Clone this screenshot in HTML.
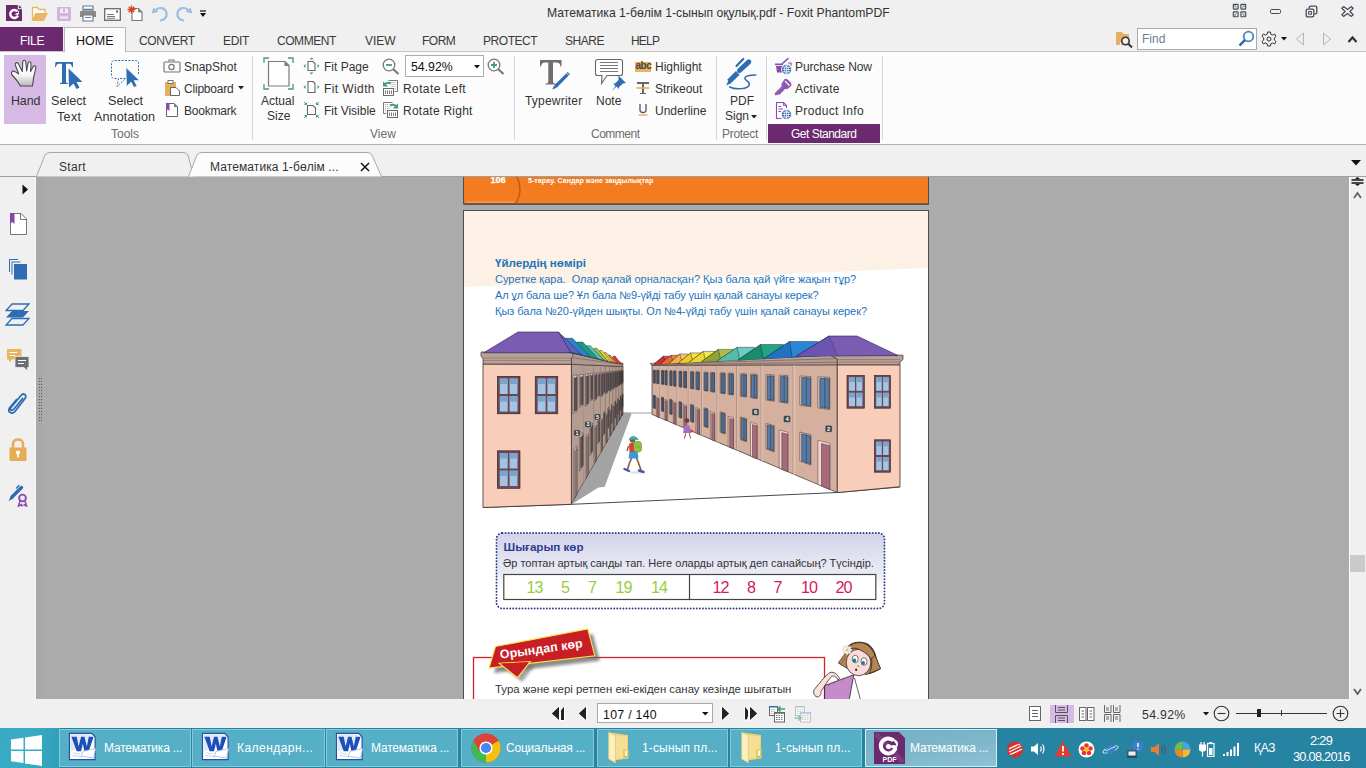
<!DOCTYPE html>
<html><head><meta charset="utf-8">
<style>
*{margin:0;padding:0;box-sizing:border-box}
html,body{width:1366px;height:768px;overflow:hidden;background:#f0f0f0;font-family:"Liberation Sans",sans-serif;font-size:12px;color:#222}
.a{position:absolute}
.t{position:absolute;white-space:nowrap;line-height:1}
#title{left:0;top:0;width:1366px;height:27px;background:#f0f0f0}
#menu{left:0;top:27px;width:1366px;height:25px;background:#f0f0f0}
#ribbon{left:0;top:52px;width:1366px;height:93px;background:#fcfcfc;border-bottom:1px solid #b3b3b3}
#doctabs{left:0;top:145px;width:1366px;height:32px;background:#f0f0f0;border-bottom:1px solid #a0a0a0}
#side{left:0;top:177px;width:36px;height:522px;background:#f0f0f0;border-right:1px solid #f8f8f8}
#view{left:36px;top:177px;width:1313px;height:522px;background:#ababab;overflow:hidden}
#vscroll{left:1349px;top:177px;width:17px;height:522px;background:#f0f0f0;border-left:1px solid #fff}
#status{left:0;top:699px;width:1366px;height:29px;background:#f0f0f0}
#taskbar{left:0;top:728px;width:1366px;height:40px;background:#2683a2}
.sep{position:absolute;top:56px;width:1px;height:84px;background:#d6d6d6}
.glab{position:absolute;top:128px;color:#6d6d6d;font-size:12px;white-space:nowrap;line-height:1}
.mt{position:absolute;top:35px;font-size:12px;color:#3a3a3a;white-space:nowrap;line-height:1}
.tb{position:absolute;top:731px;height:35px;background:rgba(120,200,220,0.45);border:1px solid rgba(180,230,240,0.6)}
.tbt{position:absolute;top:742px;color:#fff;font-size:12px;white-space:nowrap;line-height:1}
</style></head><body>

<!-- title bar -->
<div id="title" class="a"></div>
<div id="menu" class="a"></div>
<div class="t" style="left:547px;top:7px;font-size:12.2px;color:#333">Математика 1-бөлім 1-сынып оқулық.pdf - Foxit PhantomPDF</div>

<!-- quick access -->
<svg class="a" style="left:5px;top:4px" width="19" height="18" viewBox="0 0 19 18">
 <path d="M1 1 H12.8 V5.2 H17 V17 H1 Z" fill="#6b2a6f"/>
 <path d="M13.8 1 L17 4.2 H13.8 Z" fill="#6b2a6f"/>
 <path d="M12.2 7.2 A4 4 0 1 0 13 11.5" fill="none" stroke="#fff" stroke-width="2.4"/>
 <path d="M9.5 10.5 Q11 8.5 13.5 9 Q12.5 6.5 10.5 6 Q13 5.5 14 7.5 Q14.5 9.5 13 11 Z" fill="#fff"/>
</svg>
<svg class="a" style="left:31px;top:6px" width="18" height="16" viewBox="0 0 18 16">
 <path d="M1.5 14.5 V1.5 H6.5 L8 3.5 H14 V7" fill="#fff" stroke="#ebb660" stroke-width="1.3"/>
 <path d="M4.3 7 H17 L12.8 15 H1 Z" fill="#ebb660"/>
</svg>
<svg class="a" style="left:57px;top:7px" width="14" height="14" viewBox="0 0 14 14">
 <rect x="0" y="0" width="14" height="14" fill="#cdb6d9"/>
 <rect x="3" y="1.5" width="8" height="4.5" fill="#f3ecf6"/>
 <rect x="6" y="2" width="2" height="3" fill="#cdb6d9"/>
 <rect x="3" y="9.5" width="8" height="2" fill="#f3ecf6"/>
</svg>
<svg class="a" style="left:79px;top:5px" width="18" height="17" viewBox="0 0 18 17">
 <path d="M4 1 H14 V6 H4 Z" fill="#fff" stroke="#777" stroke-width="1.2"/>
 <path d="M4.5 4.5 H13.5" stroke="#4a84c4" stroke-width="1.5"/>
 <path d="M1 7 Q1 6 2 6 H16 Q17 6 17 7 V12 H1 Z" fill="#888"/>
 <path d="M4 10 H14 V16 H4 Z" fill="#fff" stroke="#777" stroke-width="1.2"/>
 <path d="M6 12.5 H12" stroke="#4a84c4" stroke-width="1"/>
</svg>
<svg class="a" style="left:104px;top:8px" width="17" height="13" viewBox="0 0 17 13">
 <rect x="0.7" y="0.7" width="15.6" height="11.6" fill="#fff" stroke="#6a6a6a" stroke-width="1.3"/>
 <rect x="12" y="2.5" width="2" height="2" fill="#2e6db4"/>
 <path d="M3 6.5 H10 M3 8.5 H11 M3 10.3 H11" stroke="#6a6a6a" stroke-width="0.9"/>
</svg>
<svg class="a" style="left:127px;top:5px" width="17" height="17" viewBox="0 0 17 17">
 <path d="M5 3.5 H11.5 L15 7 V15.5 H5 Z" fill="#fff" stroke="#777" stroke-width="1.1"/>
 <path d="M11 3 L15.5 7.5 H11 Z" fill="#888"/>
 <path d="M4.5 0.5 V8.5 M0.5 4.5 H8.5 M1.7 1.7 L7.3 7.3 M7.3 1.7 L1.7 7.3" stroke="#d9402a" stroke-width="1.3"/>
</svg>
<svg class="a" style="left:151px;top:6px" width="18" height="16" viewBox="0 0 18 16">
 <path d="M4.5 4.5 C7.5 0.5 14 1.5 15.5 6.5 C16.5 10.5 13.5 14.5 9 14.5" fill="none" stroke="#9ebfe0" stroke-width="2.2"/>
 <path d="M0.5 7.5 L2.5 1.5 L7.5 6 Z" fill="#9ebfe0"/>
</svg>
<svg class="a" style="left:175px;top:6px" width="18" height="16" viewBox="0 0 18 16">
 <path d="M13.5 4.5 C10.5 0.5 4 1.5 2.5 6.5 C1.5 10.5 4.5 14.5 9 14.5" fill="none" stroke="#9ebfe0" stroke-width="2.2"/>
 <path d="M17.5 7.5 L15.5 1.5 L10.5 6 Z" fill="#9ebfe0"/>
</svg>
<svg class="a" style="left:200px;top:10px" width="6" height="8" viewBox="0 0 6 8">
 <path d="M0 1 H6" stroke="#111" stroke-width="1.2"/>
 <path d="M0 3 H6 L3 7 Z" fill="#111"/>
</svg>

<!-- window controls -->
<svg class="a" style="left:1232px;top:3px" width="16" height="15" viewBox="0 0 16 15">
 <g fill="none" stroke="#454b58" stroke-width="1.15">
  <rect x="1.3" y="1.3" width="4.8" height="4.8" rx="0.5"/><rect x="8.9" y="1.3" width="4.8" height="4.8" rx="0.5"/>
  <rect x="1.3" y="8.9" width="4.8" height="4.8" rx="0.5"/><rect x="8.9" y="8.9" width="4.8" height="4.8" rx="0.5"/>
 </g>
 <g fill="none" stroke="#6a707c" stroke-width="0.7">
  <path d="M2.8 2.8 L4.8 4.8 M2.8 4.3 V2.8 H4.3"/><path d="M12.2 2.8 L10.2 4.8 M10.7 2.8 H12.2 V4.3"/>
  <path d="M2.8 12.2 L4.8 10.2 M2.8 10.7 V12.2 H4.3"/><path d="M12.2 12.2 L10.2 10.2 M12.2 10.7 V12.2 H10.7"/>
 </g>
</svg>
<div class="a" style="left:1270px;top:9px;width:11px;height:5px;border:1.4px solid #454b58;border-radius:1.6px"></div>
<svg class="a" style="left:1305px;top:5px" width="13" height="13" viewBox="0 0 13 13">
 <path d="M4.2 3.5 V2.5 Q4.2 1.2 5.5 1.2 H10.5 Q11.8 1.2 11.8 2.5 V7.5 Q11.8 8.8 10.5 8.8 H9.5" fill="none" stroke="#454b58" stroke-width="1.3"/>
 <rect x="1.2" y="4.2" width="7.6" height="7.6" rx="1.3" fill="#f0f0f0" stroke="#454b58" stroke-width="1.3"/>
 <rect x="3.6" y="6.6" width="2.8" height="2.6" fill="none" stroke="#454b58" stroke-width="1"/>
</svg>
<svg class="a" style="left:1341px;top:6px" width="13" height="11" viewBox="0 0 13 11">
 <path d="M0.8 2.2 L2.6 0.6 L6.5 3.6 L10.4 0.6 L12.2 2.2 L8.8 5.5 L12.2 8.8 L10.4 10.4 L6.5 7.4 L2.6 10.4 L0.8 8.8 L4.2 5.5 Z" fill="#f4f4f4" stroke="#454b58" stroke-width="1.2" stroke-linejoin="round"/>
</svg>

<!-- find area -->
<svg class="a" style="left:1115px;top:31px" width="19" height="17" viewBox="0 0 19 17">
 <path d="M1 1 H7 L8.5 3 H14 V7 H1 Z" fill="#e6b060"/>
 <path d="M1 4 H14 V14 H1 Z" fill="#e6b060"/>
 <path d="M5 14 L8.5 7" stroke="#fff" stroke-width="1.2"/>
 <circle cx="10.5" cy="10" r="3.7" fill="#f0f0f0" stroke="#333" stroke-width="1.6"/>
 <path d="M13 12.5 L17 16.5" stroke="#333" stroke-width="2"/>
</svg>
<div class="a" style="left:1137px;top:28px;width:120px;height:22px;background:#fff;border:1px solid #a9a9a9"></div>
<div class="t" style="left:1142px;top:33px;color:#6d7d8d;font-size:12px">Find</div>
<svg class="a" style="left:1238px;top:30px" width="17" height="17" viewBox="0 0 17 17">
 <circle cx="10.5" cy="6.5" r="4.8" fill="none" stroke="#3c8ac6" stroke-width="1.8"/>
 <path d="M7 10 L1.5 15.5" stroke="#2c5f9c" stroke-width="2.4"/>
</svg>
<svg class="a" style="left:1261px;top:31px" width="16" height="16" viewBox="0 0 16 16">
 <path d="M6.6 1 H9.4 L9.9 3.2 L11.6 4.1 L13.6 3 L15 5.4 L13.3 6.9 V9.1 L15 10.6 L13.6 13 L11.6 11.9 L9.9 12.8 L9.4 15 H6.6 L6.1 12.8 L4.4 11.9 L2.4 13 L1 10.6 L2.7 9.1 V6.9 L1 5.4 L2.4 3 L4.4 4.1 L6.1 3.2 Z" fill="none" stroke="#333" stroke-width="1"/>
 <circle cx="8" cy="8" r="2" fill="none" stroke="#333" stroke-width="1"/>
</svg>
<svg class="a" style="left:1281px;top:37px" width="6" height="4"><path d="M0 0 H6 L3 3.5 Z" fill="#111"/></svg>
<svg class="a" style="left:1295px;top:32px" width="10" height="14" viewBox="0 0 10 14"><path d="M8.5 1 L1.5 7 L8.5 13 Z" fill="none" stroke="#b5b5b5" stroke-width="1"/></svg>
<svg class="a" style="left:1322px;top:32px" width="10" height="14" viewBox="0 0 10 14"><path d="M1.5 1 L8.5 7 L1.5 13 Z" fill="none" stroke="#b5b5b5" stroke-width="1"/></svg>
<svg class="a" style="left:1347px;top:35px" width="11" height="9" viewBox="0 0 11 9"><path d="M1.5 7 L5.5 2.5 L9.5 7" fill="none" stroke="#333" stroke-width="2.2"/></svg>

<!-- menu tabs -->
<div class="a" style="left:0;top:51px;width:1366px;height:1px;background:#c6c6c6"></div>
<div class="a" style="left:0;top:27px;width:63px;height:24px;background:#6b2a6f"></div>
<div class="t" style="left:20px;top:35px;color:#fff;font-size:12px;letter-spacing:-0.3px">FILE</div>
<div class="a" style="left:64px;top:27px;width:62px;height:26px;background:#fcfcfc;border:1px solid #b9b9b9;border-bottom:none"></div>
<div class="t" style="left:76px;top:35px;color:#111;font-size:12.5px">HOME</div>
<div class="mt" style="left:139px;letter-spacing:-0.4px">CONVERT</div>
<div class="mt" style="left:223px;letter-spacing:-0.3px">EDIT</div>
<div class="mt" style="left:277px;letter-spacing:-0.45px">COMMENT</div>
<div class="mt" style="left:365px">VIEW</div>
<div class="mt" style="left:422px;letter-spacing:-0.5px">FORM</div>
<div class="mt" style="left:483px;letter-spacing:-0.45px">PROTECT</div>
<div class="mt" style="left:565px;letter-spacing:-0.45px">SHARE</div>
<div class="mt" style="left:631px;letter-spacing:-0.8px">HELP</div>

<!-- ribbon -->
<div id="ribbon" class="a"></div>
<!-- Tools group -->
<div class="a" style="left:4px;top:55px;width:42px;height:69px;background:#d6b9e4"></div>
<svg class="a" style="left:8px;top:56px" width="34" height="34" viewBox="0 0 34 34">
 <defs><linearGradient id="hg" x1="0" y1="0" x2="0" y2="1"><stop offset="0" stop-color="#fff"/><stop offset="0.55" stop-color="#fafafa"/><stop offset="1" stop-color="#b8b8b8"/></linearGradient></defs>
 <path d="M12.4 30 C10.5 26 8 23 4.5 19.5 C2.5 17.5 3.5 14.5 6 15.2 C8 15.8 9.5 17 10.8 18 L7.4 9.2 C6.6 6.8 9.4 5.6 10.4 7.8 L14.3 15.4 L14.8 6 C14.9 3.6 17.6 3.6 17.8 6 L18.6 15 L20 7.4 C20.5 5 23.2 5.3 23 7.8 L22.6 15.6 L25 11 C26 9 28.6 9.8 27.8 12.2 C26.4 17 25.2 22 24.5 30 Z" fill="url(#hg)" stroke="#4a4a4a" stroke-width="1.1" stroke-linejoin="round"/>
</svg>
<div class="t" style="left:11px;top:95px;font-size:12.4px;letter-spacing:-0.1px;color:#333">Hand</div>
<svg class="a" style="left:54px;top:61px" width="30" height="29" viewBox="0 0 30 29">
 <path d="M1.5 1 H19 V6 H18 C17.5 3.5 17 2.8 15 2.8 H12 V20.5 C12 21.5 12.5 22 14 22 V23 H6 V22 C7.5 22 8 21.5 8 20.5 V2.8 H5 C3 2.8 2.5 3.5 2 6 H1 Z" fill="#2e6db4"/>
 <path d="M14.5 7.5 L28.5 21 H22.5 L25.5 26.5 L22.5 28 L19.5 22.5 L15 26.5 Z" fill="#2e6db4"/>
</svg>
<div class="t" style="left:51px;top:95px;font-size:12.6px;color:#333">Select</div>
<div class="t" style="left:57px;top:111px;font-size:12.6px;letter-spacing:0.3px;color:#333">Text</div>
<svg class="a" style="left:110px;top:59px" width="32" height="30" viewBox="0 0 32 30">
 <path d="M15.5 19.5 H8.5 L7 27.5 L14.5 20.5 M6.5 19.5 H4.5 Q1.5 19.5 1.5 16.5 V4.5 Q1.5 1.5 4.5 1.5 H25.5 Q28.5 1.5 28.5 4.5 V15" fill="none" stroke="#2e6db4" stroke-width="1" stroke-dasharray="2 1.4"/>
 <path d="M16 8.5 L29.5 21.5 H24 L27 27 L24 28.5 L21 23 L16.5 27.5 Z" fill="#2e6db4" stroke="#fcfcfc" stroke-width="0.6"/>
</svg>
<div class="t" style="left:108px;top:95px;font-size:12.6px;color:#333">Select</div>
<div class="t" style="left:94px;top:111px;font-size:12.6px;letter-spacing:0.1px;color:#333">Annotation</div>
<svg class="a" style="left:163px;top:59px" width="18" height="14" viewBox="0 0 18 14">
 <path d="M6 2.5 V1 H11 V2.5" fill="none" stroke="#777" stroke-width="1.2"/>
 <rect x="1" y="3" width="16" height="10" rx="1" fill="none" stroke="#777" stroke-width="1.2"/>
 <circle cx="8.5" cy="8" r="2.6" fill="none" stroke="#777" stroke-width="1.2"/>
</svg>
<div class="t" style="left:184px;top:61px;color:#333">SnapShot</div>
<svg class="a" style="left:164px;top:79px" width="17" height="18" viewBox="0 0 17 18">
 <rect x="1" y="3" width="11" height="14" fill="#e7ae5c"/>
 <rect x="4" y="1.5" width="5" height="3" fill="#fff" stroke="#777" stroke-width="1"/>
 <path d="M6.5 8.5 H12 L15.5 12 V16.5 H6.5 Z" fill="#fff" stroke="#666" stroke-width="1"/>
</svg>
<div class="t" style="left:184px;top:83px;letter-spacing:-0.2px;color:#333">Clipboard</div>
<svg class="a" style="left:238px;top:86px" width="7" height="4"><path d="M0 0 H6 L3 3.5 Z" fill="#222"/></svg>
<svg class="a" style="left:165px;top:102px" width="14" height="16" viewBox="0 0 14 16">
 <path d="M1.5 1.5 H9 L12.5 5 V14.5 H1.5 Z" fill="#fff" stroke="#666" stroke-width="1"/>
 <path d="M9 1 L13 5 H9 Z" fill="#777"/>
 <path d="M1 1 H4.5 V9 L2.8 7.5 L1 9 Z" fill="#8a4bb0"/>
</svg>
<div class="t" style="left:184px;top:105px;letter-spacing:-0.2px;color:#333">Bookmark</div>
<div class="glab" style="left:111px">Tools</div>
<div class="sep" style="left:252px"></div>

<!-- View group -->
<svg class="a" style="left:263px;top:57px" width="31" height="34" viewBox="0 0 31 34">
 <path d="M1 6 V1 H6 M25 1 H30 V6 M30 27 V32 H25 M6 32 H1 V27" fill="none" stroke="#3f9e78" stroke-width="1.3"/>
 <path d="M5.5 4.5 H22 L26 8.5 V29 H5.5 Z" fill="#fff" stroke="#7a7a7a" stroke-width="1.2"/>
 <path d="M21.5 4.5 L26 9 H21.5 Z" fill="#7a7a7a"/>
</svg>
<div class="t" style="left:261px;top:95px;color:#333">Actual</div>
<div class="t" style="left:267px;top:110px;color:#333">Size</div>
<svg class="a" style="left:303px;top:57px" width="17" height="18" viewBox="0 0 17 18">
 <path d="M5 4.5 H10 L12 6.5 V13.5 H5 Z" fill="#fff" stroke="#666" stroke-width="1.1"/>
 <path d="M8.5 0.5 L10.5 2.5 H6.5 Z M8.5 17.5 L10.5 15.5 H6.5 Z M0.5 9 L2.5 7 V11 Z M16.5 9 L14.5 7 V11 Z" fill="#3f9e78"/>
</svg>
<div class="t" style="left:324px;top:61px;color:#333">Fit Page</div>
<svg class="a" style="left:303px;top:80px" width="17" height="14" viewBox="0 0 17 14">
 <path d="M5 1.5 H10 L12 3.5 V12.5 H5 Z" fill="#fff" stroke="#666" stroke-width="1.1"/>
 <path d="M0.5 7 L2.5 5 V9 Z M16.5 7 L14.5 5 V9 Z" fill="#3f9e78"/>
</svg>
<div class="t" style="left:324px;top:83px;color:#333;letter-spacing:0.4px">Fit Width</div>
<svg class="a" style="left:303px;top:101px" width="17" height="18" viewBox="0 0 17 18">
 <path d="M4.5 4.5 H10 L12.5 7 V13.5 H4.5 Z" fill="#fff" stroke="#666" stroke-width="1.1"/>
 <path d="M1 1 L3.5 3.5 M3.5 1.5 V3.5 H1.5 M16 1 L13.5 3.5 M13.5 1.5 V3.5 H15.5 M1 17 L3.5 14.5 M1.5 14.5 H3.5 V16.5 M16 17 L13.5 14.5 M15.5 14.5 H13.5 V16.5" fill="none" stroke="#3f9e78" stroke-width="1"/>
</svg>
<div class="t" style="left:324px;top:105px;color:#333">Fit Visible</div>
<svg class="a" style="left:382px;top:58px" width="18" height="17" viewBox="0 0 18 17">
 <circle cx="7" cy="7" r="5.8" fill="#fff" stroke="#777" stroke-width="1.3"/>
 <path d="M11 11 L16.5 16" stroke="#777" stroke-width="2.2"/>
 <path d="M4 7 H10" stroke="#3f9e78" stroke-width="1.8"/>
</svg>
<div class="a" style="left:405px;top:55px;width:79px;height:22px;background:#fff;border:1px solid #acacac"></div>
<div class="t" style="left:411px;top:61px;color:#111;font-size:12.3px">54.92%</div>
<svg class="a" style="left:474px;top:65px" width="6" height="4"><path d="M0 0 H6 L3 3.5 Z" fill="#111"/></svg>
<svg class="a" style="left:487px;top:58px" width="18" height="17" viewBox="0 0 18 17">
 <circle cx="7" cy="7" r="5.8" fill="#fff" stroke="#777" stroke-width="1.3"/>
 <path d="M11 11 L16.5 16" stroke="#777" stroke-width="2.2"/>
 <path d="M4 7 H10 M7 4 V10" stroke="#3f9e78" stroke-width="1.8"/>
</svg>
<svg class="a" style="left:382px;top:79px" width="17" height="18" viewBox="0 0 17 18">
 <path d="M6.5 1.5 H15.5 V12.5 H12.5" fill="none" stroke="#7a7a7a" stroke-width="1"/>
 <path d="M9.5 3.5 H14 M9.5 5.5 H14 M9.5 7.5 H14 M11 9.5 H14" stroke="#9a9a9a" stroke-width="0.8" stroke-dasharray="1.2 0.8"/>
 <rect x="1.5" y="9.5" width="10" height="7" fill="#fff" stroke="#6a6a6a" stroke-width="1"/>
 <path d="M3.5 11.5 V15 M5.5 11.5 V15 M7.5 11.5 V15 M9.5 11.5 V15" stroke="#6a6a6a" stroke-width="0.9"/>
 <path d="M1 7.5 V2.5 L2.8 4 C4.8 2.5 7.5 2.3 9.5 3.8 L8.2 5.5 C6.8 4.6 5.2 4.7 4.2 5.3 L6 7.5 Z" fill="#3f9e78"/>
</svg>
<div class="t" style="left:403px;top:83px;color:#333;letter-spacing:0.4px">Rotate Left</div>
<svg class="a" style="left:382px;top:101px" width="17" height="18" viewBox="0 0 17 18">
 <path d="M10.5 1.5 H1.5 V12.5 H4.5" fill="none" stroke="#7a7a7a" stroke-width="1"/>
 <path d="M3 3.5 H7.5 M3 5.5 H7.5 M3 7.5 H7.5 M3 9.5 H6" stroke="#9a9a9a" stroke-width="0.8" stroke-dasharray="1.2 0.8"/>
 <rect x="5.5" y="9.5" width="10" height="7" fill="#fff" stroke="#6a6a6a" stroke-width="1"/>
 <path d="M7.5 11.5 V15 M9.5 11.5 V15 M11.5 11.5 V15 M13.5 11.5 V15" stroke="#6a6a6a" stroke-width="0.9"/>
 <path d="M16 7.5 V2.5 L14.2 4 C12.2 2.5 9.5 2.3 7.5 3.8 L8.8 5.5 C10.2 4.6 11.8 4.7 12.8 5.3 L11 7.5 Z" fill="#3f9e78"/>
</svg>
<div class="t" style="left:403px;top:105px;color:#333;letter-spacing:0.25px">Rotate Right</div>
<div class="glab" style="left:370px">View</div>
<div class="sep" style="left:514px"></div>

<!-- Comment group -->
<svg class="a" style="left:539px;top:59px" width="33" height="32" viewBox="0 0 33 32">
 <path d="M1 1 H22.5 V7.5 H21.5 C21 4.5 20 3.5 17.5 3.5 H14 V22.5 C14 24 14.8 24.5 16.8 24.5 V25.5 H6.5 V24.5 C8.5 24.5 9.3 24 9.3 22.5 V3.5 H6 C3.5 3.5 2.5 4.5 2 7.5 H1 Z" fill="#6e6e6e"/>
 <path d="M29.8 14.2 L16.5 27.5" stroke="#2e6db4" stroke-width="3.2"/>
 <path d="M15.3 26.2 L13.2 30.5 L17.8 28.7 Z" fill="#2e6db4"/>
 <path d="M27.2 13.8 L30.2 16.8" stroke="#fff" stroke-width="0.7"/>
</svg>
<div class="t" style="left:525px;top:95px;color:#333;letter-spacing:0.2px">Typewriter</div>
<svg class="a" style="left:594px;top:58px" width="34" height="34" viewBox="0 0 34 34">
 <path d="M3.5 1.5 H26.5 Q28.5 1.5 28.5 3.5 V15.5 Q28.5 17.5 26.5 17.5 H13 L7.5 25.5 L8 17.5 H3.5 Q1.5 17.5 1.5 15.5 V3.5 Q1.5 1.5 3.5 1.5 Z" fill="#fff" stroke="#666" stroke-width="1.1"/>
 <path d="M6 4.5 H24 M6 7.5 H24 M6 10.5 H24 M6 13.5 H24" stroke="#555" stroke-width="0.8"/>
 <path d="M24.5 17.5 L32 25 L29 25.5 L25 29 L25 31 L22.5 28.5 L18 33 L21.5 28 L19 25.5 L21 25.5 L24.5 22 Z" fill="#2e6db4"/>
</svg>
<div class="t" style="left:596px;top:95px;color:#333">Note</div>
<div class="a" style="left:635px;top:62px;width:16px;height:10px;background:#e9b45f"></div>
<div class="t" style="left:635.5px;top:61px;color:#444;font-size:10px;font-weight:bold;letter-spacing:-0.5px">abc</div>
<div class="t" style="left:655px;top:61px;color:#333">Highlight</div>
<svg class="a" style="left:636px;top:81px" width="14" height="14" viewBox="0 0 14 14">
 <path d="M1 1 H13 V3 H8 V12 H10 V13 H4 V12 H6 V3 H1 Z" fill="#666"/>
 <path d="M0.5 7 H13.5" stroke="#e9a94a" stroke-width="1.5"/>
</svg>
<div class="t" style="left:655px;top:83px;color:#333">Strikeout</div>
<svg class="a" style="left:638px;top:103px" width="10" height="13" viewBox="0 0 10 13">
 <path d="M2 1 V7 Q2 9.5 5 9.5 Q8 9.5 8 7 V1" fill="none" stroke="#555" stroke-width="1.3"/>
 <path d="M0.5 12 H9.5" stroke="#e9a94a" stroke-width="1.3"/>
</svg>
<div class="t" style="left:655px;top:105px;color:#333">Underline</div>
<div class="glab" style="left:591px;letter-spacing:-0.5px">Comment</div>
<div class="sep" style="left:716px"></div>

<!-- Protect -->
<svg class="a" style="left:720px;top:54px" width="44" height="40" viewBox="0 0 44 40">
 <path d="M16.5 12 L23.2 5" stroke="#2e6db4" stroke-width="2.2" stroke-linecap="round"/>
 <path d="M19.5 16.5 L28.8 7.8" stroke="#2e6db4" stroke-width="5" stroke-linecap="round"/>
 <path d="M9 27.5 L17.8 18.8" stroke="#2e6db4" stroke-width="5.2"/>
 <path d="M8.5 26 L6.3 31.5 L11.5 29 Z" fill="#2e6db4"/>
 <path d="M9.6 33 C16 36 28 35 29.2 31 C30.5 27 24.5 27 24.8 24 C25 21.5 30 21 35.7 20.9" fill="none" stroke="#2e6db4" stroke-width="1.5" stroke-linecap="round"/>
</svg>
<div class="t" style="left:730px;top:95px;color:#333">PDF</div>
<div class="t" style="left:725px;top:110px;color:#333">Sign</div>
<svg class="a" style="left:751px;top:115px" width="6" height="4"><path d="M0 0 H6 L3 3.5 Z" fill="#222"/></svg>
<div class="glab" style="left:722px;letter-spacing:-0.3px">Protect</div>
<div class="sep" style="left:766px"></div>

<!-- Purchase -->
<svg class="a" style="left:770px;top:54px" width="24" height="24" viewBox="0 0 24 24">
 <path d="M5 9.5 H13 V11.2 H5 Z" fill="#8a4bb0"/>
 <path d="M6 12 H12.5 V18.5 H7 Z" fill="#8a4bb0"/>
 <path d="M12.5 9.5 L18 4.5" stroke="#8a4bb0" stroke-width="1.6" stroke-linecap="round"/>
 <path d="M18 9 H21 V11.5" fill="none" stroke="#8a4bb0" stroke-width="1.2"/>
 <circle cx="16.5" cy="15.5" r="5" fill="#2e63a8" stroke="#fcfcfc" stroke-width="0.9"/>
 <path d="M12.3 15.5 H20.7 M12.9 13.3 H20.1 M12.9 17.7 H20.1 M16.5 11.3 V19.7" stroke="#fff" stroke-width="0.7"/>
 <ellipse cx="16.5" cy="15.5" rx="2" ry="4.2" fill="none" stroke="#fff" stroke-width="0.7"/>
</svg>
<div class="t" style="left:795px;top:61px;color:#333;letter-spacing:-0.1px">Purchase Now</div>
<svg class="a" style="left:773px;top:77px" width="21" height="21" viewBox="0 0 24 24">
 <path d="M13 2.5 Q15 1 17 3 L20.5 6.5 Q22 8.5 20.5 10.5 L17 13.5 Q15.5 14.5 14 13.5 L7 20.5 L6 19.5 L5 21 L4 20 L3.5 21.5 L2 20 Q1.5 19 3 17.5 L10 10.5 Q9 9 10 7.5 Z" fill="#8f55b3"/>
 <path d="M14 5 L18.5 9.5" stroke="#fcfcfc" stroke-width="1.5" stroke-linecap="round"/>
 <path d="M4 18.5 L10.5 12" stroke="#c9a7dc" stroke-width="0.6" stroke-dasharray="1 0.8"/>
</svg>
<div class="t" style="left:795px;top:83px;color:#333;letter-spacing:0.25px">Activate</div>
<svg class="a" style="left:770px;top:98px" width="24" height="24" viewBox="0 0 24 24">
 <path d="M11.5 20.5 H6.5 V4.5 H13.5 L16.5 7.5 V10" fill="none" stroke="#8a4bb0" stroke-width="1.1"/>
 <path d="M13.5 4.5 V7.5 H16.5" fill="none" stroke="#8a4bb0" stroke-width="0.9"/>
 <path d="M8.5 8.5 H11 M8.5 11 H13 M8.5 13.5 H11" stroke="#8a4bb0" stroke-width="1"/>
 <circle cx="16.5" cy="16.5" r="5" fill="#2e63a8" stroke="#fcfcfc" stroke-width="0.9"/>
 <path d="M12.3 16.5 H20.7 M12.9 14.3 H20.1 M12.9 18.7 H20.1 M16.5 12.3 V20.7" stroke="#fff" stroke-width="0.7"/>
 <ellipse cx="16.5" cy="16.5" rx="2" ry="4.2" fill="none" stroke="#fff" stroke-width="0.7"/>
</svg>
<div class="t" style="left:795px;top:105px;color:#333;letter-spacing:0.35px">Product Info</div>
<div class="a" style="left:768px;top:124px;width:112px;height:19px;background:#6b2a6f"></div>
<div class="t" style="left:791px;top:128px;color:#fff;letter-spacing:-0.5px">Get Standard</div>
<div class="sep" style="left:882px"></div>

<!-- doc tabs -->
<div id="doctabs" class="a"></div>
<svg class="a" style="left:0;top:145px" width="1366" height="32" viewBox="0 0 1366 32">
 <path d="M36.5 31.5 L45 10 Q47 7.5 50 7.5 H183 Q186 7.5 188 10 L193.5 31.5" fill="#f0f0f0" stroke="#a8a8a8" stroke-width="1"/>
 <path d="M188.5 31.5 L197 10 Q199 7.5 202 7.5 H367 Q370 7.5 372 10 L381.5 31.5" fill="#fcfcfc" stroke="#a8a8a8" stroke-width="1"/>
 <path d="M1351 15 H1361 L1356 20.5 Z" fill="#111"/>
</svg>
<div class="t" style="left:59px;top:161px;color:#333;letter-spacing:0.3px">Start</div>
<div class="t" style="left:210px;top:161px;color:#333;letter-spacing:0.1px">Математика 1-бөлім ...</div>
<svg class="a" style="left:360px;top:162px" width="10" height="10" viewBox="0 0 10 10"><path d="M1 1 L9 9 M9 1 L1 9" stroke="#111" stroke-width="1.5"/></svg>

<!-- side -->
<div id="side" class="a"></div>
<svg class="a" style="left:21px;top:184px" width="8" height="11" viewBox="0 0 8 11"><path d="M1.5 0.5 L7 5.5 L1.5 10.5 Z" fill="#111"/></svg>
<svg class="a" style="left:9px;top:212px" width="19" height="24" viewBox="0 0 19 24">
 <path d="M1.5 1.5 H12 L17.5 7 V22.5 H1.5 Z" fill="#fff" stroke="#777" stroke-width="1"/>
 <path d="M11.5 1.5 V7.5 H17.5" fill="none" stroke="#777" stroke-width="1"/>
 <path d="M1 1 H5.5 V12 L3.2 10 L1 12 Z" fill="#7e4aa8"/>
</svg>
<svg class="a" style="left:8px;top:258px" width="20" height="22" viewBox="0 0 20 22">
 <path d="M1 1 H10 V2 H2 V14 H1 Z" fill="#2e6db4"/>
 <path d="M3.5 3.5 H12.5 V4.5 H4.5 V16.5 H3.5 Z" fill="#2e6db4"/>
 <rect x="6" y="6" width="13" height="15.5" fill="#2e6db4"/>
</svg>
<svg class="a" style="left:5px;top:303px" width="25" height="24" viewBox="0 0 25 24">
 <path d="M7 1 H24 L18 7.5 H1 Z" fill="none" stroke="#2e6db4" stroke-width="1.3"/>
 <path d="M7 8 H24 L18 14.5 H1 Z" fill="#2e6db4"/>
 <path d="M7 15.5 H24 L18 22 H1 Z" fill="none" stroke="#2e6db4" stroke-width="1.3"/>
</svg>
<svg class="a" style="left:6px;top:348px" width="24" height="24" viewBox="0 0 24 24">
 <path d="M1 1 H15.5 V11.5 H6 L3 14.5 V11.5 H1 Z" fill="#e9b45f"/>
 <path d="M3.5 4.5 H11 M3.5 7.5 H9" stroke="#fff" stroke-width="1.1"/>
 <path d="M9 8.5 H23 V19.5 H21.5 V23 L18 19.5 H9 Z" fill="#6f6f6f" stroke="#f0f0f0" stroke-width="0.8"/>
 <path d="M12 12.5 H20 M12 15.5 H18" stroke="#fff" stroke-width="1.1"/>
</svg>
<svg class="a" style="left:7px;top:392px" width="21" height="24" viewBox="0 0 21 24">
 <path d="M16 6 L7 17 C5 19.5 2.5 18 4 15.5 L14 3.5 C16.5 0.5 20.5 3 18 6.5 L8 19.5 C5 23 0 20 2.5 16 L10 7" fill="none" stroke="#2e6db4" stroke-width="1.8"/>
</svg>
<svg class="a" style="left:8px;top:437px" width="20" height="25" viewBox="0 0 20 25">
 <path d="M5 11 V7 C5 1 15 1 15 7 V11" fill="none" stroke="#e6ad55" stroke-width="2.6"/>
 <rect x="1.5" y="10.5" width="17" height="13.5" rx="0.8" fill="#e6ad55"/>
 <circle cx="10" cy="15.5" r="2.1" fill="#fff"/>
 <path d="M10 15.5 V20.5" stroke="#fff" stroke-width="1.7"/>
</svg>
<svg class="a" style="left:7px;top:484px" width="22" height="23" viewBox="0 0 22 23">
 <path d="M9.5 4 L12 1.5" stroke="#2e6db4" stroke-width="1.5" stroke-linecap="round"/>
 <path d="M14.5 3.5 L5 13" stroke="#2e6db4" stroke-width="3.4" stroke-linecap="round"/>
 <path d="M4 12 L1.5 17 L6.5 14.5 Z" fill="#2e6db4"/>
 <circle cx="15.5" cy="14" r="3.4" fill="#f0f0f0" stroke="#8a4bb0" stroke-width="1.9"/>
 <path d="M13 17 L11.5 22 L14.5 20.5 L15.5 22.5 M18 17 L19.5 22 L16.5 20.5" fill="none" stroke="#8a4bb0" stroke-width="1.5"/>
</svg>

<div id="view" class="a"></div>
<div class="a" style="left:36px;top:177px;width:7px;height:522px;background:#a8a8a8"></div>
<svg class="a" style="left:39px;top:378px" width="3" height="44"><g fill="#5a5a5a"><rect x="0" y="0" width="1" height="1"/><rect x="2" y="0" width="1" height="1"/><rect x="0" y="3" width="1" height="1"/><rect x="2" y="3" width="1" height="1"/><rect x="0" y="6" width="1" height="1"/><rect x="2" y="6" width="1" height="1"/><rect x="0" y="9" width="1" height="1"/><rect x="2" y="9" width="1" height="1"/><rect x="0" y="12" width="1" height="1"/><rect x="2" y="12" width="1" height="1"/><rect x="0" y="15" width="1" height="1"/><rect x="2" y="15" width="1" height="1"/><rect x="0" y="18" width="1" height="1"/><rect x="2" y="18" width="1" height="1"/><rect x="0" y="21" width="1" height="1"/><rect x="2" y="21" width="1" height="1"/><rect x="0" y="24" width="1" height="1"/><rect x="2" y="24" width="1" height="1"/><rect x="0" y="27" width="1" height="1"/><rect x="2" y="27" width="1" height="1"/><rect x="0" y="30" width="1" height="1"/><rect x="2" y="30" width="1" height="1"/><rect x="0" y="33" width="1" height="1"/><rect x="2" y="33" width="1" height="1"/><rect x="0" y="36" width="1" height="1"/><rect x="2" y="36" width="1" height="1"/><rect x="0" y="39" width="1" height="1"/><rect x="2" y="39" width="1" height="1"/><rect x="0" y="42" width="1" height="1"/><rect x="2" y="42" width="1" height="1"/></g></svg>

<!-- PDF PAGES -->
<svg class="a" style="left:37px;top:177px" width="1312" height="522" viewBox="37 177 1312 522">
<defs><linearGradient id="bluebox" x1="0" y1="0" x2="0" y2="1"><stop offset="0" stop-color="#d3d3ea"/><stop offset="0.55" stop-color="#ececf6"/><stop offset="0.75" stop-color="#fff"/></linearGradient><filter id="bshadow" x="-20%" y="-20%" width="140%" height="160%"><feGaussianBlur stdDeviation="1.6"/></filter></defs>
<rect x="463.5" y="150" width="465" height="54" fill="#f47c20" stroke="#4d4d4d" stroke-width="1"/>
<rect x="464" y="203.5" width="465" height="1.5" fill="#555"/>
<path d="M516 203 Q524 189 516 175" fill="none" stroke="#a8500f" stroke-width="1.4" opacity="0.75"/>
<path d="M466 202 H514" stroke="#f9a45e" stroke-width="1.5" opacity="0.7"/>
<text x="490.5" y="182.6" font-family="Liberation Sans" font-weight="bold" font-size="9.2" fill="#fff" stroke="#fff" stroke-width="0.25" letter-spacing="-0.1">106</text>
<text x="528" y="183" font-family="Liberation Sans" font-weight="bold" font-size="7.1" fill="#fff" letter-spacing="0.02">5-тарау. Сандар және заңдылықтар</text>
<rect x="463.5" y="210.5" width="465" height="600" fill="#fff" stroke="#4d4d4d" stroke-width="1"/>
<polygon points="464,211 928,211 928,268 464,287" fill="#fdf0e4"/>
<g font-family="Liberation Sans" fill="#1b75bc">
<text x="495" y="267" font-size="11.6" font-weight="bold">Үйлердің нөмірі</text>
<text x="495" y="283" font-size="11" style="white-space:pre">Суретке қара.  Олар қалай орналасқан? Қыз бала қай үйге жақын тұр?</text>
<text x="495" y="299" font-size="11" letter-spacing="-0.12">Ал ұл бала ше? Ұл бала №9-үйді табу үшін қалай санауы керек?</text>
<text x="495" y="315" font-size="11" letter-spacing="-0.02">Қыз бала №20-үйден шықты. Ол №4-үйді табу үшін қалай санауы керек?</text>
</g>
<polygon points="571.9,504.0 622.7,414.8 623.3,412.3 632.0,412.5 604.7,486.7 598.4,487.5 573.0,503.5" fill="#a3a3a3"/>
<path d="M632 413 H652" stroke="#888" stroke-width="0.8"/>
<path d="M483 507.5 L571.5 504.3 L837 492.5 L900 487" fill="none" stroke="#333" stroke-width="0.9"/>
<polygon points="571.4,364.3 623.0,366.5 623.0,413.7 571.4,504.0" fill="#b59c90" stroke="#3a2e2e" stroke-width="0.7"/>
<polygon points="572.9,375.3 576.9,374.9 576.9,411.2 572.9,413.7" fill="#d8c6be" stroke="#2d2528" stroke-width="0.45"/>
<polygon points="574.1,377.9 576.9,377.5 576.9,410.0 574.1,411.6" fill="#5a4f55" stroke="#2d2528" stroke-width="0.4"/>
<polygon points="579.4,374.7 583.0,374.3 583.0,405.2 579.4,407.3" fill="#d8c6be" stroke="#2d2528" stroke-width="0.45"/>
<polygon points="580.5,377.0 583.0,376.7 583.0,404.0 580.5,405.4" fill="#5a4f55" stroke="#2d2528" stroke-width="0.4"/>
<polygon points="574.0,449.5 576.9,446.3 576.9,494.3 574.0,499.5" fill="#d8c6be" stroke="#2d2528" stroke-width="0.45"/>
<polygon points="574.9,451.2 576.9,448.9 576.9,494.3 574.9,497.9" fill="#9c8580" stroke="#2d2528" stroke-width="0.4"/>
<polygon points="579.4,436.1 583.0,432.6 583.0,465.8 579.4,471.2" fill="#d8c6be" stroke="#2d2528" stroke-width="0.45"/>
<polygon points="580.5,437.5 583.0,434.9 583.0,464.7 580.5,468.4" fill="#5a4f55" stroke="#2d2528" stroke-width="0.4"/>
<path d="M584.3 364.9 L584.3 481.4" stroke="#5a4a48" stroke-width="0.6"/>
<polygon points="584.3,364.9 585.0,364.9 585.0,480.1 584.3,481.4" fill="#c4ab9f"/>
<polygon points="585.4,374.1 588.3,373.8 588.3,404.4 585.4,406.1" fill="#d8c6be" stroke="#2d2528" stroke-width="0.45"/>
<polygon points="586.3,376.2 588.3,376.0 588.3,403.3 586.3,404.5" fill="#5a4f55" stroke="#2d2528" stroke-width="0.4"/>
<polygon points="590.1,373.6 592.7,373.3 592.7,399.7 590.1,401.2" fill="#d8c6be" stroke="#2d2528" stroke-width="0.45"/>
<polygon points="590.8,375.6 592.7,375.4 592.7,398.7 590.8,399.7" fill="#5a4f55" stroke="#2d2528" stroke-width="0.4"/>
<polygon points="586.2,436.3 588.3,433.9 588.3,474.4 586.2,478.2" fill="#d8c6be" stroke="#2d2528" stroke-width="0.45"/>
<polygon points="586.8,437.8 588.3,436.1 588.3,474.4 586.8,477.0" fill="#9c8580" stroke="#2d2528" stroke-width="0.4"/>
<polygon points="590.1,425.7 592.7,423.1 592.7,451.5 590.1,455.4" fill="#d8c6be" stroke="#2d2528" stroke-width="0.45"/>
<polygon points="590.8,427.0 592.7,425.1 592.7,450.5 590.8,453.2" fill="#5a4f55" stroke="#2d2528" stroke-width="0.4"/>
<path d="M593.6 365.2 L593.6 465.1" stroke="#5a4a48" stroke-width="0.6"/>
<polygon points="593.6,365.2 594.1,365.3 594.1,464.2 593.6,465.1" fill="#c4ab9f"/>
<polygon points="594.4,373.2 596.5,372.9 596.5,399.4 594.4,400.7" fill="#d8c6be" stroke="#2d2528" stroke-width="0.45"/>
<polygon points="595.0,375.0 596.5,374.8 596.5,398.5 595.0,399.4" fill="#5a4f55" stroke="#2d2528" stroke-width="0.4"/>
<polygon points="597.8,372.8 599.7,372.6 599.7,395.7 597.8,396.8" fill="#d8c6be" stroke="#2d2528" stroke-width="0.45"/>
<polygon points="598.4,374.6 599.7,374.4 599.7,394.9 598.4,395.6" fill="#5a4f55" stroke="#2d2528" stroke-width="0.4"/>
<polygon points="595.0,426.7 596.5,425.0 596.5,460.0 595.0,462.8" fill="#d8c6be" stroke="#2d2528" stroke-width="0.45"/>
<polygon points="595.4,428.1 596.5,426.9 596.5,460.0 595.4,461.9" fill="#9c8580" stroke="#2d2528" stroke-width="0.4"/>
<polygon points="597.8,418.1 599.7,416.2 599.7,441.1 597.8,443.9" fill="#d8c6be" stroke="#2d2528" stroke-width="0.45"/>
<polygon points="598.4,419.3 599.7,418.0 599.7,440.2 598.4,442.2" fill="#5a4f55" stroke="#2d2528" stroke-width="0.4"/>
<path d="M600.4 365.5 L600.4 453.2" stroke="#5a4a48" stroke-width="0.6"/>
<polygon points="600.4,365.5 600.8,365.6 600.8,452.6 600.4,453.2" fill="#c4ab9f"/>
<polygon points="601.0,372.5 602.5,372.3 602.5,395.8 601.0,396.8" fill="#d8c6be" stroke="#2d2528" stroke-width="0.45"/>
<polygon points="601.5,374.2 602.5,374.0 602.5,395.0 601.5,395.6" fill="#5a4f55" stroke="#2d2528" stroke-width="0.4"/>
<polygon points="603.5,372.2 604.9,372.1 604.9,392.8 603.5,393.6" fill="#d8c6be" stroke="#2d2528" stroke-width="0.45"/>
<polygon points="603.9,373.8 604.9,373.7 604.9,392.0 603.9,392.5" fill="#5a4f55" stroke="#2d2528" stroke-width="0.4"/>
<polygon points="601.4,419.7 602.5,418.5 602.5,449.5 601.4,451.5" fill="#d8c6be" stroke="#2d2528" stroke-width="0.45"/>
<polygon points="601.7,421.0 602.5,420.1 602.5,449.5 601.7,450.9" fill="#9c8580" stroke="#2d2528" stroke-width="0.4"/>
<polygon points="603.5,412.5 604.9,411.1 604.9,433.4 603.5,435.5" fill="#d8c6be" stroke="#2d2528" stroke-width="0.45"/>
<polygon points="603.9,413.7 604.9,412.7 604.9,432.6 603.9,434.1" fill="#5a4f55" stroke="#2d2528" stroke-width="0.4"/>
<path d="M605.4 365.7 L605.4 444.5" stroke="#5a4a48" stroke-width="0.6"/>
<polygon points="605.4,365.7 605.7,365.8 605.7,443.9 605.4,444.5" fill="#c4ab9f"/>
<polygon points="605.9,372.0 607.2,371.9 607.2,393.0 605.9,393.8" fill="#d8c6be" stroke="#2d2528" stroke-width="0.45"/>
<polygon points="606.3,373.5 607.2,373.4 607.2,392.3 606.3,392.8" fill="#5a4f55" stroke="#2d2528" stroke-width="0.4"/>
<polygon points="607.9,371.8 609.1,371.7 609.1,390.4 607.9,391.1" fill="#d8c6be" stroke="#2d2528" stroke-width="0.45"/>
<polygon points="608.3,373.2 609.1,373.1 609.1,389.7 608.3,390.2" fill="#5a4f55" stroke="#2d2528" stroke-width="0.4"/>
<polygon points="606.2,414.5 607.2,413.4 607.2,441.4 606.2,443.1" fill="#d8c6be" stroke="#2d2528" stroke-width="0.45"/>
<polygon points="606.5,415.7 607.2,415.0 607.2,441.4 606.5,442.6" fill="#9c8580" stroke="#2d2528" stroke-width="0.4"/>
<polygon points="607.9,408.1 609.1,407.0 609.1,427.2 607.9,428.9" fill="#d8c6be" stroke="#2d2528" stroke-width="0.45"/>
<polygon points="608.3,409.3 609.1,408.5 609.1,426.5 608.3,427.7" fill="#5a4f55" stroke="#2d2528" stroke-width="0.4"/>
<path d="M609.5 365.9 L609.5 437.3" stroke="#5a4a48" stroke-width="0.6"/>
<polygon points="609.5,365.9 609.8,365.9 609.8,436.9 609.5,437.3" fill="#c4ab9f"/>
<polygon points="609.9,371.6 610.9,371.5 610.9,390.8 609.9,391.4" fill="#d8c6be" stroke="#2d2528" stroke-width="0.45"/>
<polygon points="610.2,373.0 610.9,372.9 610.9,390.1 610.2,390.5" fill="#5a4f55" stroke="#2d2528" stroke-width="0.4"/>
<polygon points="611.5,371.4 612.4,371.3 612.4,388.6 611.5,389.1" fill="#d8c6be" stroke="#2d2528" stroke-width="0.45"/>
<polygon points="611.8,372.8 612.4,372.7 612.4,387.9 611.8,388.2" fill="#5a4f55" stroke="#2d2528" stroke-width="0.4"/>
<polygon points="610.1,410.2 610.9,409.4 610.9,434.9 610.1,436.2" fill="#d8c6be" stroke="#2d2528" stroke-width="0.45"/>
<polygon points="610.4,411.4 610.9,410.8 610.9,434.9 610.4,435.8" fill="#9c8580" stroke="#2d2528" stroke-width="0.4"/>
<polygon points="611.5,404.7 612.4,403.8 612.4,422.3 611.5,423.7" fill="#d8c6be" stroke="#2d2528" stroke-width="0.45"/>
<polygon points="611.8,405.8 612.4,405.1 612.4,421.7 611.8,422.6" fill="#5a4f55" stroke="#2d2528" stroke-width="0.4"/>
<path d="M612.7 366.1 L612.7 431.7" stroke="#5a4a48" stroke-width="0.6"/>
<polygon points="612.7,366.1 613.0,366.1 613.0,431.3 612.7,431.7" fill="#c4ab9f"/>
<polygon points="613.1,371.3 614.1,371.2 614.1,388.8 613.1,389.5" fill="#d8c6be" stroke="#2d2528" stroke-width="0.45"/>
<polygon points="613.4,372.5 614.1,372.4 614.1,388.2 613.4,388.6" fill="#5a4f55" stroke="#2d2528" stroke-width="0.4"/>
<polygon points="614.7,371.1 615.7,371.0 615.7,386.7 614.7,387.2" fill="#d8c6be" stroke="#2d2528" stroke-width="0.45"/>
<polygon points="615.0,372.3 615.7,372.2 615.7,386.1 615.0,386.5" fill="#5a4f55" stroke="#2d2528" stroke-width="0.4"/>
<polygon points="613.4,406.7 614.1,405.9 614.1,429.2 613.4,430.6" fill="#d8c6be" stroke="#2d2528" stroke-width="0.45"/>
<polygon points="613.6,407.7 614.1,407.1 614.1,429.2 613.6,430.2" fill="#9c8580" stroke="#2d2528" stroke-width="0.4"/>
<polygon points="614.7,401.5 615.7,400.6 615.7,417.5 614.7,418.8" fill="#d8c6be" stroke="#2d2528" stroke-width="0.45"/>
<polygon points="615.0,402.4 615.7,401.8 615.7,416.9 615.0,417.8" fill="#5a4f55" stroke="#2d2528" stroke-width="0.4"/>
<path d="M616.0 366.2 L616.0 425.9" stroke="#5a4a48" stroke-width="0.6"/>
<polygon points="616.0,366.2 616.2,366.2 616.2,425.6 616.0,425.9" fill="#c4ab9f"/>
<polygon points="616.3,370.9 617.2,370.9 617.2,387.0 616.3,387.5" fill="#d8c6be" stroke="#2d2528" stroke-width="0.45"/>
<polygon points="616.6,372.1 617.2,372.0 617.2,386.4 616.6,386.8" fill="#5a4f55" stroke="#2d2528" stroke-width="0.4"/>
<polygon points="617.7,370.8 618.4,370.7 618.4,385.1 617.7,385.6" fill="#d8c6be" stroke="#2d2528" stroke-width="0.45"/>
<polygon points="617.9,371.9 618.4,371.8 618.4,384.6 617.9,384.9" fill="#5a4f55" stroke="#2d2528" stroke-width="0.4"/>
<polygon points="616.5,403.3 617.2,402.6 617.2,423.9 616.5,425.0" fill="#d8c6be" stroke="#2d2528" stroke-width="0.45"/>
<polygon points="616.7,404.2 617.2,403.7 617.2,423.9 616.7,424.7" fill="#9c8580" stroke="#2d2528" stroke-width="0.4"/>
<polygon points="617.7,398.6 618.4,397.9 618.4,413.4 617.7,414.5" fill="#d8c6be" stroke="#2d2528" stroke-width="0.45"/>
<polygon points="617.9,399.5 618.4,399.0 618.4,412.8 617.9,413.6" fill="#5a4f55" stroke="#2d2528" stroke-width="0.4"/>
<path d="M618.7 366.3 L618.7 421.2" stroke="#5a4a48" stroke-width="0.6"/>
<polygon points="618.7,366.3 618.9,366.3 618.9,420.9 618.7,421.2" fill="#c4ab9f"/>
<polygon points="619.0,370.7 619.8,370.6 619.8,385.4 619.0,385.9" fill="#d8c6be" stroke="#2d2528" stroke-width="0.45"/>
<polygon points="619.3,371.7 619.8,371.7 619.8,384.9 619.3,385.2" fill="#5a4f55" stroke="#2d2528" stroke-width="0.4"/>
<polygon points="620.3,370.5 621.0,370.5 621.0,383.7 620.3,384.1" fill="#d8c6be" stroke="#2d2528" stroke-width="0.45"/>
<polygon points="620.5,371.6 621.0,371.5 621.0,383.2 620.5,383.4" fill="#5a4f55" stroke="#2d2528" stroke-width="0.4"/>
<polygon points="619.2,400.3 619.8,399.7 619.8,419.3 619.2,420.3" fill="#d8c6be" stroke="#2d2528" stroke-width="0.45"/>
<polygon points="619.4,401.2 619.8,400.8 619.8,419.3 619.4,420.0" fill="#9c8580" stroke="#2d2528" stroke-width="0.4"/>
<polygon points="620.3,396.0 621.0,395.3 621.0,409.5 620.3,410.6" fill="#d8c6be" stroke="#2d2528" stroke-width="0.45"/>
<polygon points="620.5,396.9 621.0,396.3 621.0,409.0 620.5,409.8" fill="#5a4f55" stroke="#2d2528" stroke-width="0.4"/>
<path d="M621.3 366.4 L621.3 416.7" stroke="#5a4a48" stroke-width="0.6"/>
<polygon points="621.3,366.4 621.4,366.4 621.4,416.4 621.3,416.7" fill="#c4ab9f"/>
<polygon points="621.5,370.4 622.0,370.4 622.0,384.1 621.5,384.4" fill="#d8c6be" stroke="#2d2528" stroke-width="0.45"/>
<polygon points="621.7,371.4 622.0,371.4 622.0,383.6 621.7,383.8" fill="#5a4f55" stroke="#2d2528" stroke-width="0.4"/>
<polygon points="622.4,370.3 622.8,370.3 622.8,382.6 622.4,382.9" fill="#d8c6be" stroke="#2d2528" stroke-width="0.45"/>
<polygon points="622.5,371.3 622.8,371.2 622.8,382.2 622.5,382.4" fill="#5a4f55" stroke="#2d2528" stroke-width="0.4"/>
<polygon points="621.6,397.7 622.0,397.3 622.0,415.4 621.6,416.1" fill="#d8c6be" stroke="#2d2528" stroke-width="0.45"/>
<polygon points="621.8,398.6 622.0,398.3 622.0,415.4 621.8,415.9" fill="#9c8580" stroke="#2d2528" stroke-width="0.4"/>
<polygon points="622.4,394.0 622.8,393.6 622.8,406.9 622.4,407.6" fill="#d8c6be" stroke="#2d2528" stroke-width="0.45"/>
<polygon points="622.5,394.9 622.8,394.5 622.8,406.4 622.5,406.9" fill="#5a4f55" stroke="#2d2528" stroke-width="0.4"/>
<rect x="573.7" y="429.7" width="6.6" height="6.4" rx="1.5" fill="#404548" stroke="#cfc2bb" stroke-width="0.4"/><text x="577" y="434.9" font-family="Liberation Sans" font-size="5.4" font-weight="bold" fill="#fff" text-anchor="middle">1</text>
<rect x="584.7" y="421.2" width="6.6" height="6.4" rx="1.5" fill="#404548" stroke="#cfc2bb" stroke-width="0.4"/><text x="588" y="426.4" font-family="Liberation Sans" font-size="5.4" font-weight="bold" fill="#fff" text-anchor="middle">3</text>
<rect x="594.2" y="413.7" width="6.6" height="6.4" rx="1.5" fill="#404548" stroke="#cfc2bb" stroke-width="0.4"/><text x="597.5" y="418.9" font-family="Liberation Sans" font-size="5.4" font-weight="bold" fill="#fff" text-anchor="middle">5</text>
<polygon points="571.0,352.8 623.0,363.2 623.0,366.5 571.4,364.3" fill="#b09890" stroke="#3a2e2e" stroke-width="0.6"/>
<path d="M571 357.5 L623 364.6" stroke="#6b5550" stroke-width="0.5"/>
<polygon points="483,364 571.4,364.3 571.4,504.3 483,507.5" fill="#f8cdb9" stroke="#3a2e2e" stroke-width="0.8"/>
<polygon points="481.0,352.0 573.0,352.5 573.0,356.5 571.4,358.0 571.4,364.3 483.0,364.0 483.0,358.0 481.0,356.5" fill="#b9a196" stroke="#3a2e2e" stroke-width="0.7"/>
<path d="M483 358 H571.4 M483 360.5 H571.4" stroke="#7a625c" stroke-width="0.5"/>
<rect x="497.3" y="376.3" width="22.69999999999999" height="37.5" fill="#6a4752" stroke="#2d2226" stroke-width="0.6"/><rect x="499.8" y="378.6" width="7.9" height="15.4" fill="#a3c4e4"/><rect x="499.8" y="378.6" width="7.9" height="5.4" fill="#7ca3cc"/><rect x="499.8" y="396.2" width="7.9" height="15.4" fill="#a3c4e4"/><rect x="499.8" y="396.2" width="7.9" height="5.4" fill="#7ca3cc"/><rect x="509.6" y="378.6" width="7.9" height="15.4" fill="#a3c4e4"/><rect x="509.6" y="378.6" width="7.9" height="5.4" fill="#7ca3cc"/><rect x="509.6" y="396.2" width="7.9" height="15.4" fill="#a3c4e4"/><rect x="509.6" y="396.2" width="7.9" height="5.4" fill="#7ca3cc"/>
<rect x="535.2" y="376.3" width="22.59999999999991" height="37.5" fill="#6a4752" stroke="#2d2226" stroke-width="0.6"/><rect x="537.7" y="378.6" width="7.9" height="15.4" fill="#a3c4e4"/><rect x="537.7" y="378.6" width="7.9" height="5.4" fill="#7ca3cc"/><rect x="537.7" y="396.2" width="7.9" height="15.4" fill="#a3c4e4"/><rect x="537.7" y="396.2" width="7.9" height="5.4" fill="#7ca3cc"/><rect x="547.4" y="378.6" width="7.9" height="15.4" fill="#a3c4e4"/><rect x="547.4" y="378.6" width="7.9" height="5.4" fill="#7ca3cc"/><rect x="547.4" y="396.2" width="7.9" height="15.4" fill="#a3c4e4"/><rect x="547.4" y="396.2" width="7.9" height="5.4" fill="#7ca3cc"/>
<rect x="497.3" y="450.8" width="22.69999999999999" height="37.5" fill="#6a4752" stroke="#2d2226" stroke-width="0.6"/><rect x="499.8" y="453.1" width="7.9" height="15.4" fill="#a3c4e4"/><rect x="499.8" y="453.1" width="7.9" height="5.4" fill="#7ca3cc"/><rect x="499.8" y="470.7" width="7.9" height="15.4" fill="#a3c4e4"/><rect x="499.8" y="470.7" width="7.9" height="5.4" fill="#7ca3cc"/><rect x="509.6" y="453.1" width="7.9" height="15.4" fill="#a3c4e4"/><rect x="509.6" y="453.1" width="7.9" height="5.4" fill="#7ca3cc"/><rect x="509.6" y="470.7" width="7.9" height="15.4" fill="#a3c4e4"/><rect x="509.6" y="470.7" width="7.9" height="5.4" fill="#7ca3cc"/>
<polygon points="607.8,361.5 613.8,356.1 615.0,356.1 621.7,364.3" fill="#e03b37" stroke="#1f2440" stroke-width="0.45"/>
<polygon points="602.5,360.3 608.5,355.0 610.0,355.0 617.5,363.3" fill="#ee8b39" stroke="#1f2440" stroke-width="0.45"/>
<polygon points="598.5,359.4 604.5,352.5 606.0,352.5 614.7,362.6" fill="#f2c83a" stroke="#1f2440" stroke-width="0.45"/>
<polygon points="593.8,358.3 599.8,350.5 602.0,350.5 611.5,361.9" fill="#eedd30" stroke="#1f2440" stroke-width="0.45"/>
<polygon points="588.5,357.0 594.5,348.2 597.0,348.2 608.0,361.1" fill="#a6c23c" stroke="#1f2440" stroke-width="0.45"/>
<polygon points="580.3,355.1 586.3,345.7 590.4,345.7 603.9,360.1" fill="#4cc2b2" stroke="#1f2440" stroke-width="0.45"/>
<polygon points="570.6,352.9 576.6,342.1 582.8,342.1 598.0,358.8" fill="#1a9c7b" stroke="#1f2440" stroke-width="0.45"/>
<polygon points="559.2,350.2 565.2,338.3 572.5,338.3 590.4,357.0" fill="#2f7fd0" stroke="#1f2440" stroke-width="0.45"/>
<polygon points="558.5,332.2 565.2,338.2 581.3,354.5 570.2,352.3" fill="#5c63b9" stroke="#1f2440" stroke-width="0.5"/>
<polygon points="518.0,332.0 558.6,332.0 571.0,352.8 483.6,352.8" fill="#7a5cb2" stroke="#2c2450" stroke-width="0.6"/>
<polygon points="652.0,365.0 837.3,364.8 837.3,492.6 652.0,414.4" fill="#d6b09f" stroke="#3a2e2e" stroke-width="0.7"/>
<polygon points="653.2,370.0 655.3,370.1 655.3,383.3 653.2,383.0" fill="#ead5ca" stroke="#2b2528" stroke-width="0.5"/>
<polygon points="653.6,370.6 655.2,370.7 655.2,382.9 653.6,382.6" fill="#587ba5" stroke="#1f2430" stroke-width="0.55"/>
<path d="M654.4 370.0 L654.4 383.2" stroke="#2b2d3a" stroke-width="0.5"/>
<polygon points="656.6,370.1 658.9,370.2 658.9,383.8 656.6,383.5" fill="#ead5ca" stroke="#2b2528" stroke-width="0.5"/>
<polygon points="657.0,370.8 658.8,370.8 658.8,383.4 657.0,383.1" fill="#587ba5" stroke="#1f2430" stroke-width="0.55"/>
<path d="M657.9 370.2 L657.9 383.7" stroke="#2b2d3a" stroke-width="0.5"/>
<polygon points="653.2,395.0 655.3,395.5 655.3,408.7 653.2,407.9" fill="#ead5ca" stroke="#2b2528" stroke-width="0.5"/>
<polygon points="653.6,395.6 655.2,396.1 655.2,408.3 653.6,407.7" fill="#587ba5" stroke="#1f2430" stroke-width="0.55"/>
<path d="M654.4 395.3 L654.4 408.4" stroke="#2b2d3a" stroke-width="0.5"/>
<polygon points="656.6,397.4 658.9,398.0 658.9,417.3 656.6,416.4" fill="#f0d6cb" stroke="#3b2d30" stroke-width="0.45"/>
<polygon points="657.3,398.6 658.9,399.0 658.9,417.3 657.3,416.6" fill="#a66a7a" stroke="#3b2d30" stroke-width="0.45"/>
<path d="M660.3 365.0 L660.3 417.9" stroke="#5a4a48" stroke-width="0.6"/>
<polygon points="660.3,365.0 661.3,365.0 661.3,418.3 660.3,417.9" fill="#e3c4b5"/>
<polygon points="661.5,370.3 663.5,370.4 663.5,384.5 661.5,384.2" fill="#ead5ca" stroke="#2b2528" stroke-width="0.5"/>
<polygon points="661.8,371.0 663.5,371.1 663.5,384.1 661.8,383.8" fill="#587ba5" stroke="#1f2430" stroke-width="0.55"/>
<path d="M662.7 370.4 L662.7 384.4" stroke="#2b2d3a" stroke-width="0.5"/>
<polygon points="664.8,370.5 667.0,370.6 667.0,385.1 664.8,384.7" fill="#ead5ca" stroke="#2b2528" stroke-width="0.5"/>
<polygon points="665.2,371.1 666.9,371.2 666.9,384.6 665.2,384.3" fill="#587ba5" stroke="#1f2430" stroke-width="0.55"/>
<path d="M666.1 370.5 L666.1 384.9" stroke="#2b2d3a" stroke-width="0.5"/>
<polygon points="661.5,397.0 663.5,397.6 663.5,411.7 661.5,410.9" fill="#ead5ca" stroke="#2b2528" stroke-width="0.5"/>
<polygon points="661.8,397.8 663.5,398.2 663.5,411.2 661.8,410.6" fill="#587ba5" stroke="#1f2430" stroke-width="0.55"/>
<path d="M662.7 397.3 L662.7 411.4" stroke="#2b2d3a" stroke-width="0.5"/>
<polygon points="664.8,399.5 667.0,400.1 667.0,420.7 664.8,419.8" fill="#f0d6cb" stroke="#3b2d30" stroke-width="0.45"/>
<polygon points="665.5,400.8 667.0,401.2 667.0,420.7 665.5,420.1" fill="#a66a7a" stroke="#3b2d30" stroke-width="0.45"/>
<path d="M668.4 365.0 L668.4 421.3" stroke="#5a4a48" stroke-width="0.6"/>
<polygon points="668.4,365.0 669.4,365.0 669.4,421.7 668.4,421.3" fill="#e3c4b5"/>
<polygon points="669.7,370.7 672.0,370.8 672.0,385.8 669.7,385.5" fill="#ead5ca" stroke="#2b2528" stroke-width="0.5"/>
<polygon points="670.1,371.4 671.9,371.5 671.9,385.3 670.1,385.1" fill="#587ba5" stroke="#1f2430" stroke-width="0.55"/>
<path d="M671.0 370.7 L671.0 385.7" stroke="#2b2d3a" stroke-width="0.5"/>
<polygon points="673.4,370.8 675.8,370.9 675.8,386.4 673.4,386.0" fill="#ead5ca" stroke="#2b2528" stroke-width="0.5"/>
<polygon points="673.8,371.5 675.7,371.6 675.7,385.9 673.8,385.6" fill="#587ba5" stroke="#1f2430" stroke-width="0.55"/>
<path d="M674.8 370.9 L674.8 386.2" stroke="#2b2d3a" stroke-width="0.5"/>
<polygon points="669.7,399.1 672.0,399.7 672.0,414.7 669.7,413.9" fill="#ead5ca" stroke="#2b2528" stroke-width="0.5"/>
<polygon points="670.1,399.9 671.9,400.4 671.9,414.2 670.1,413.6" fill="#587ba5" stroke="#1f2430" stroke-width="0.55"/>
<path d="M671.0 399.4 L671.0 414.4" stroke="#2b2d3a" stroke-width="0.5"/>
<polygon points="673.4,401.8 675.8,402.4 675.8,424.4 673.4,423.4" fill="#f0d6cb" stroke="#3b2d30" stroke-width="0.45"/>
<polygon points="674.1,403.2 675.8,403.6 675.8,424.4 674.1,423.7" fill="#a66a7a" stroke="#3b2d30" stroke-width="0.45"/>
<path d="M677.3 365.0 L677.3 425.1" stroke="#5a4a48" stroke-width="0.6"/>
<polygon points="677.3,365.0 678.3,365.0 678.3,425.5 677.3,425.1" fill="#e3c4b5"/>
<polygon points="679.0,371.1 681.7,371.2 681.7,387.3 679.0,386.9" fill="#ead5ca" stroke="#2b2528" stroke-width="0.5"/>
<polygon points="679.4,371.8 681.6,371.9 681.6,386.8 679.4,386.4" fill="#587ba5" stroke="#1f2430" stroke-width="0.55"/>
<path d="M680.6 371.1 L680.6 387.1" stroke="#2b2d3a" stroke-width="0.5"/>
<polygon points="683.5,371.2 686.5,371.4 686.5,388.0 683.5,387.6" fill="#ead5ca" stroke="#2b2528" stroke-width="0.5"/>
<polygon points="684.0,372.0 686.4,372.1 686.4,387.5 684.0,387.1" fill="#587ba5" stroke="#1f2430" stroke-width="0.55"/>
<path d="M685.3 371.3 L685.3 387.8" stroke="#2b2d3a" stroke-width="0.5"/>
<polygon points="679.0,401.5 681.7,402.2 681.7,418.3 679.0,417.3" fill="#ead5ca" stroke="#2b2528" stroke-width="0.5"/>
<polygon points="679.4,402.3 681.6,402.9 681.6,417.7 679.4,416.9" fill="#587ba5" stroke="#1f2430" stroke-width="0.55"/>
<path d="M680.6 401.9 L680.6 417.9" stroke="#2b2d3a" stroke-width="0.5"/>
<polygon points="683.5,404.5 686.5,405.3 686.5,429.0 683.5,427.7" fill="#f0d6cb" stroke="#3b2d30" stroke-width="0.45"/>
<polygon points="684.4,406.0 686.5,406.6 686.5,429.0 684.4,428.1" fill="#a66a7a" stroke="#3b2d30" stroke-width="0.45"/>
<path d="M688.4 365.0 L688.4 429.8" stroke="#5a4a48" stroke-width="0.6"/>
<polygon points="688.4,365.0 689.4,365.0 689.4,430.2 688.4,429.8" fill="#e3c4b5"/>
<polygon points="690.4,371.5 693.7,371.7 693.7,389.1 690.4,388.6" fill="#ead5ca" stroke="#2b2528" stroke-width="0.5"/>
<polygon points="690.9,372.3 693.5,372.5 693.5,388.5 690.9,388.1" fill="#587ba5" stroke="#1f2430" stroke-width="0.55"/>
<path d="M692.3 371.6 L692.3 388.9" stroke="#2b2d3a" stroke-width="0.5"/>
<polygon points="695.8,371.7 699.4,371.9 699.4,389.9 695.8,389.4" fill="#ead5ca" stroke="#2b2528" stroke-width="0.5"/>
<polygon points="696.4,372.6 699.2,372.7 699.2,389.4 696.4,388.9" fill="#587ba5" stroke="#1f2430" stroke-width="0.55"/>
<path d="M697.9 371.8 L697.9 389.7" stroke="#2b2d3a" stroke-width="0.5"/>
<polygon points="690.4,404.3 693.7,405.2 693.7,422.6 690.4,421.4" fill="#ead5ca" stroke="#2b2528" stroke-width="0.5"/>
<polygon points="690.9,405.3 693.5,405.9 693.5,422.0 690.9,421.1" fill="#587ba5" stroke="#1f2430" stroke-width="0.55"/>
<path d="M692.3 404.8 L692.3 422.1" stroke="#2b2d3a" stroke-width="0.5"/>
<polygon points="695.8,407.7 699.4,408.7 699.4,434.4 695.8,432.9" fill="#f0d6cb" stroke="#3b2d30" stroke-width="0.45"/>
<polygon points="696.9,409.4 699.4,410.1 699.4,434.4 696.9,433.3" fill="#a66a7a" stroke="#3b2d30" stroke-width="0.45"/>
<path d="M701.6 364.9 L701.6 435.3" stroke="#5a4a48" stroke-width="0.6"/>
<polygon points="701.6,364.9 702.6,364.9 702.6,435.8 701.6,435.3" fill="#e3c4b5"/>
<polygon points="704.0,372.1 707.9,372.2 707.9,391.2 704.0,390.6" fill="#ead5ca" stroke="#2b2528" stroke-width="0.5"/>
<polygon points="704.6,373.0 707.7,373.1 707.7,390.6 704.6,390.2" fill="#587ba5" stroke="#1f2430" stroke-width="0.55"/>
<path d="M706.2 372.2 L706.2 391.0" stroke="#2b2d3a" stroke-width="0.5"/>
<polygon points="710.4,372.3 714.6,372.5 714.6,392.3 710.4,391.6" fill="#ead5ca" stroke="#2b2528" stroke-width="0.5"/>
<polygon points="711.1,373.3 714.5,373.4 714.5,391.6 711.1,391.1" fill="#587ba5" stroke="#1f2430" stroke-width="0.55"/>
<path d="M712.9 372.4 L712.9 392.0" stroke="#2b2d3a" stroke-width="0.5"/>
<polygon points="704.0,407.8 707.9,408.8 707.9,427.8 704.0,426.3" fill="#ead5ca" stroke="#2b2528" stroke-width="0.5"/>
<polygon points="704.6,408.8 707.7,409.6 707.7,427.1 704.6,426.0" fill="#587ba5" stroke="#1f2430" stroke-width="0.55"/>
<path d="M706.2 408.3 L706.2 427.2" stroke="#2b2d3a" stroke-width="0.5"/>
<polygon points="710.4,411.6 714.6,412.7 714.6,440.8 710.4,439.0" fill="#f0d6cb" stroke="#3b2d30" stroke-width="0.45"/>
<polygon points="711.7,413.5 714.6,414.3 714.6,440.8 711.7,439.6" fill="#a66a7a" stroke="#3b2d30" stroke-width="0.45"/>
<path d="M717.3 364.9 L717.3 442.0" stroke="#5a4a48" stroke-width="0.6"/>
<polygon points="717.3,364.9 718.3,364.9 718.3,442.4 717.3,442.0" fill="#e3c4b5"/>
<polygon points="720.2,372.8 725.1,373.0 725.1,393.8 720.2,393.1" fill="#ead5ca" stroke="#2b2528" stroke-width="0.5"/>
<polygon points="721.0,373.7 724.9,373.9 724.9,393.2 721.0,392.6" fill="#587ba5" stroke="#1f2430" stroke-width="0.55"/>
<path d="M723.0 372.9 L723.0 393.5" stroke="#2b2d3a" stroke-width="0.5"/>
<polygon points="728.2,373.1 733.4,373.3 733.4,395.1 728.2,394.3" fill="#ead5ca" stroke="#2b2528" stroke-width="0.5"/>
<polygon points="729.0,374.1 733.2,374.3 733.2,394.4 729.0,393.8" fill="#587ba5" stroke="#1f2430" stroke-width="0.55"/>
<path d="M731.2 373.2 L731.2 394.8" stroke="#2b2d3a" stroke-width="0.5"/>
<polygon points="720.2,411.9 725.1,413.1 725.1,434.0 720.2,432.2" fill="#ead5ca" stroke="#2b2528" stroke-width="0.5"/>
<polygon points="721.0,413.0 724.9,414.0 724.9,433.3 721.0,431.9" fill="#587ba5" stroke="#1f2430" stroke-width="0.55"/>
<path d="M723.0 412.6 L723.0 433.3" stroke="#2b2d3a" stroke-width="0.5"/>
<polygon points="728.2,416.3 733.4,417.7 733.4,448.8 728.2,446.5" fill="#f0d6cb" stroke="#3b2d30" stroke-width="0.45"/>
<polygon points="729.7,418.4 733.4,419.4 733.4,448.8 729.7,447.2" fill="#a66a7a" stroke="#3b2d30" stroke-width="0.45"/>
<path d="M736.7 364.9 L736.7 450.1" stroke="#5a4a48" stroke-width="0.6"/>
<polygon points="736.7,364.9 737.7,364.9 737.7,450.6 736.7,450.1" fill="#e3c4b5"/>
<polygon points="740.4,373.6 746.5,373.8 746.5,397.1 740.4,396.2" fill="#ead5ca" stroke="#2b2528" stroke-width="0.5"/>
<polygon points="741.4,374.7 746.3,374.9 746.3,396.3 741.4,395.6" fill="#587ba5" stroke="#1f2430" stroke-width="0.55"/>
<path d="M744.0 373.7 L744.0 396.7" stroke="#2b2d3a" stroke-width="0.5"/>
<polygon points="750.5,374.0 757.1,374.3 757.1,398.7 750.5,397.7" fill="#ead5ca" stroke="#2b2528" stroke-width="0.5"/>
<polygon points="751.5,375.1 756.9,375.4 756.9,397.9 751.5,397.1" fill="#587ba5" stroke="#1f2430" stroke-width="0.55"/>
<path d="M754.3 374.2 L754.3 398.3" stroke="#2b2d3a" stroke-width="0.5"/>
<polygon points="740.4,417.0 746.5,418.5 746.5,441.8 740.4,439.6" fill="#ead5ca" stroke="#2b2528" stroke-width="0.5"/>
<polygon points="741.4,418.3 746.3,419.5 746.3,441.0 741.4,439.2" fill="#587ba5" stroke="#1f2430" stroke-width="0.55"/>
<path d="M744.0 417.9 L744.0 440.8" stroke="#2b2d3a" stroke-width="0.5"/>
<polygon points="750.5,422.3 757.1,424.0 757.1,458.8 750.5,456.0" fill="#f0d6cb" stroke="#3b2d30" stroke-width="0.45"/>
<polygon points="752.5,424.6 757.1,425.9 757.1,458.8 752.5,456.8" fill="#a66a7a" stroke="#3b2d30" stroke-width="0.45"/>
<path d="M761.3 364.9 L761.3 460.5" stroke="#5a4a48" stroke-width="0.6"/>
<polygon points="761.3,364.9 762.6,364.9 762.6,461.1 761.3,460.5" fill="#e3c4b5"/>
<polygon points="766.1,374.6 774.1,375.0 774.1,401.2 766.1,400.0" fill="#ead5ca" stroke="#2b2528" stroke-width="0.5"/>
<polygon points="767.4,375.9 773.8,376.2 773.8,400.4 767.4,399.4" fill="#587ba5" stroke="#1f2430" stroke-width="0.55"/>
<path d="M770.7 374.8 L770.7 400.7" stroke="#2b2d3a" stroke-width="0.5"/>
<polygon points="779.2,375.2 787.9,375.5 787.9,403.3 779.2,402.0" fill="#ead5ca" stroke="#2b2528" stroke-width="0.5"/>
<polygon points="780.6,376.5 787.5,376.8 787.5,402.4 780.6,401.4" fill="#587ba5" stroke="#1f2430" stroke-width="0.55"/>
<path d="M784.2 375.4 L784.2 402.8" stroke="#2b2d3a" stroke-width="0.5"/>
<polygon points="766.1,423.5 774.1,425.5 774.1,451.8 766.1,448.9" fill="#ead5ca" stroke="#2b2528" stroke-width="0.5"/>
<polygon points="767.4,425.0 773.8,426.6 773.8,450.9 767.4,448.6" fill="#587ba5" stroke="#1f2430" stroke-width="0.55"/>
<path d="M770.7 424.7 L770.7 450.6" stroke="#2b2d3a" stroke-width="0.5"/>
<polygon points="779.2,429.9 787.9,432.2 787.9,471.7 779.2,468.1" fill="#f0d6cb" stroke="#3b2d30" stroke-width="0.45"/>
<polygon points="781.8,432.7 787.9,434.3 787.9,471.7 781.8,469.2" fill="#a66a7a" stroke="#3b2d30" stroke-width="0.45"/>
<path d="M793.3 364.8 L793.3 474.0" stroke="#5a4a48" stroke-width="0.6"/>
<polygon points="793.3,364.8 795.1,364.8 795.1,474.8 793.3,474.0" fill="#e3c4b5"/>
<polygon points="799.9,376.0 810.9,376.5 810.9,406.8 799.9,405.2" fill="#ead5ca" stroke="#2b2528" stroke-width="0.5"/>
<polygon points="801.7,377.5 810.5,377.9 810.5,405.8 801.7,404.5" fill="#587ba5" stroke="#1f2430" stroke-width="0.55"/>
<path d="M806.3 376.3 L806.3 406.1" stroke="#2b2d3a" stroke-width="0.5"/>
<polygon points="817.9,376.8 829.8,377.3 829.8,409.7 817.9,407.9" fill="#ead5ca" stroke="#2b2528" stroke-width="0.5"/>
<polygon points="819.8,378.3 829.3,378.7 829.3,408.6 819.8,407.2" fill="#587ba5" stroke="#1f2430" stroke-width="0.55"/>
<path d="M824.8 377.1 L824.8 408.9" stroke="#2b2d3a" stroke-width="0.5"/>
<polygon points="799.9,432.0 810.9,434.8 810.9,465.1 799.9,461.1" fill="#ead5ca" stroke="#2b2528" stroke-width="0.5"/>
<polygon points="801.7,433.8 810.5,436.1 810.5,464.0 801.7,460.9" fill="#587ba5" stroke="#1f2430" stroke-width="0.55"/>
<path d="M806.3 433.6 L806.3 463.5" stroke="#2b2d3a" stroke-width="0.5"/>
<polygon points="817.9,440.2 829.8,443.3 829.8,489.4 817.9,484.4" fill="#f0d6cb" stroke="#3b2d30" stroke-width="0.45"/>
<polygon points="821.5,443.5 829.8,445.8 829.8,489.4 821.5,485.9" fill="#a66a7a" stroke="#3b2d30" stroke-width="0.45"/>
<rect x="825.1" y="425.3" width="7.2" height="7" rx="1.6" fill="#404548" stroke="#e6d2c8" stroke-width="0.4"/><text x="828.7" y="430.90000000000003" font-family="Liberation Sans" font-size="5.8" font-weight="bold" fill="#fff" text-anchor="middle">2</text>
<rect x="783.4" y="415.5" width="7.2" height="7" rx="1.6" fill="#404548" stroke="#e6d2c8" stroke-width="0.4"/><text x="787" y="421.1" font-family="Liberation Sans" font-size="5.8" font-weight="bold" fill="#fff" text-anchor="middle">4</text>
<rect x="751.9" y="408.5" width="7.2" height="7" rx="1.6" fill="#404548" stroke="#e6d2c8" stroke-width="0.4"/><text x="755.5" y="414.1" font-family="Liberation Sans" font-size="5.8" font-weight="bold" fill="#fff" text-anchor="middle">6</text>
<polygon points="650.0,363.4 837.3,354.6 837.3,364.8 652.0,365.4" fill="#b49c91" stroke="#3a2e2e" stroke-width="0.6"/>
<path d="M651 364.3 L837 358.6 M651.5 365 L837 362.2" stroke="#5e4a46" stroke-width="0.5"/>
<path d="M651 363.8 L837 356.2" stroke="#d8c4ba" stroke-width="0.5"/>
<polygon points="837.3,364.8 900,364.8 900,486.7 837.3,492.6" fill="#f8cdb9" stroke="#3a2e2e" stroke-width="0.8"/>
<polygon points="829.0,354.5 903.0,355.2 903.0,359.5 900.0,362.0 900.0,364.8 837.3,364.8 837.3,359.0" fill="#b8a095" stroke="#3a2e2e" stroke-width="0.7"/>
<path d="M837.3 359.5 H900 M837.3 362 H900" stroke="#7a625c" stroke-width="0.5"/>
<rect x="847" y="375.4" width="17.299999999999955" height="32.80000000000001" fill="#6a4752" stroke="#2d2226" stroke-width="0.6"/><rect x="848.9" y="377.4" width="6.1" height="13.4" fill="#a3c4e4"/><rect x="848.9" y="377.4" width="6.1" height="4.7" fill="#7ca3cc"/><rect x="848.9" y="392.8" width="6.1" height="13.4" fill="#a3c4e4"/><rect x="848.9" y="392.8" width="6.1" height="4.7" fill="#7ca3cc"/><rect x="856.3" y="377.4" width="6.1" height="13.4" fill="#a3c4e4"/><rect x="856.3" y="377.4" width="6.1" height="4.7" fill="#7ca3cc"/><rect x="856.3" y="392.8" width="6.1" height="13.4" fill="#a3c4e4"/><rect x="856.3" y="392.8" width="6.1" height="4.7" fill="#7ca3cc"/>
<rect x="874.4" y="375.4" width="16.100000000000023" height="32.80000000000001" fill="#6a4752" stroke="#2d2226" stroke-width="0.6"/><rect x="876.2" y="377.4" width="5.6" height="13.4" fill="#a3c4e4"/><rect x="876.2" y="377.4" width="5.6" height="4.7" fill="#7ca3cc"/><rect x="876.2" y="392.8" width="5.6" height="13.4" fill="#a3c4e4"/><rect x="876.2" y="392.8" width="5.6" height="4.7" fill="#7ca3cc"/><rect x="883.1" y="377.4" width="5.6" height="13.4" fill="#a3c4e4"/><rect x="883.1" y="377.4" width="5.6" height="4.7" fill="#7ca3cc"/><rect x="883.1" y="392.8" width="5.6" height="13.4" fill="#a3c4e4"/><rect x="883.1" y="392.8" width="5.6" height="4.7" fill="#7ca3cc"/>
<rect x="874.4" y="439.8" width="16.100000000000023" height="32.39999999999998" fill="#6a4752" stroke="#2d2226" stroke-width="0.6"/><rect x="876.2" y="441.7" width="5.6" height="13.3" fill="#a3c4e4"/><rect x="876.2" y="441.7" width="5.6" height="4.6" fill="#7ca3cc"/><rect x="876.2" y="457.0" width="5.6" height="13.3" fill="#a3c4e4"/><rect x="876.2" y="457.0" width="5.6" height="4.6" fill="#7ca3cc"/><rect x="883.1" y="441.7" width="5.6" height="13.3" fill="#a3c4e4"/><rect x="883.1" y="441.7" width="5.6" height="4.6" fill="#7ca3cc"/><rect x="883.1" y="457.0" width="5.6" height="13.3" fill="#a3c4e4"/><rect x="883.1" y="457.0" width="5.6" height="4.6" fill="#7ca3cc"/>
<polygon points="653.9,364.2 663.4,356.2 670.0,356.2 678.0,363.0" fill="#ec3a3f" stroke="#1f2440" stroke-width="0.45"/>
<polygon points="653.9,364.2 663.4,356.2 665.9,363.6" fill="#d42a30"/>
<path d="M653.9 364.2 L663.4 356.2 L665.9 363.6" fill="none" stroke="#1f2440" stroke-width="0.45"/>
<polygon points="660.4,363.9 671.0,355.3 678.7,355.3 687.3,362.5" fill="#f4843a" stroke="#1f2440" stroke-width="0.45"/>
<polygon points="660.4,363.9 671.0,355.3 673.5,363.2" fill="#e66d2a"/>
<path d="M660.4 363.9 L671.0 355.3 L673.5 363.2" fill="none" stroke="#1f2440" stroke-width="0.45"/>
<polygon points="669.2,363.4 679.8,354.0 687.5,354.0 696.1,362.1" fill="#f8c86e" stroke="#1f2440" stroke-width="0.45"/>
<polygon points="669.2,363.4 679.8,354.0 682.3,362.8" fill="#f2b04a"/>
<path d="M669.2 363.4 L679.8 354.0 L682.3 362.8" fill="none" stroke="#1f2440" stroke-width="0.45"/>
<polygon points="678.4,363.0 690.5,352.9 702.2,352.9 713.2,361.2" fill="#f7e03a" stroke="#1f2440" stroke-width="0.45"/>
<polygon points="678.4,363.0 690.5,352.9 693.0,362.2" fill="#f0cc22"/>
<path d="M678.4 363.0 L690.5 352.9 L693.0 362.2" fill="none" stroke="#1f2440" stroke-width="0.45"/>
<polygon points="689.0,362.4 703.3,351.4 716.1,351.4 727.8,360.5" fill="#f6e844" stroke="#1f2440" stroke-width="0.45"/>
<polygon points="689.0,362.4 703.3,351.4 705.8,361.6" fill="#eed82e"/>
<path d="M689.0 362.4 L703.3 351.4 L705.8 361.6" fill="none" stroke="#1f2440" stroke-width="0.45"/>
<polygon points="701.4,361.8 718.3,349.4 733.7,349.4 746.9,359.5" fill="#a9c042" stroke="#1f2440" stroke-width="0.45"/>
<polygon points="701.4,361.8 718.3,349.4 720.8,360.8" fill="#8fa233"/>
<path d="M701.4 361.8 L718.3 349.4 L720.8 360.8" fill="none" stroke="#1f2440" stroke-width="0.45"/>
<polygon points="717.0,361.0 737.2,347.3 754.0,347.3 768.1,358.5" fill="#6ccdbf" stroke="#1f2440" stroke-width="0.45"/>
<polygon points="717.0,361.0 737.2,347.3 739.7,359.9" fill="#55bcaa"/>
<path d="M717.0 361.0 L737.2 347.3 L739.7 359.9" fill="none" stroke="#1f2440" stroke-width="0.45"/>
<polygon points="738.0,360.0 760.6,344.5 783.1,344.5 800.6,356.8" fill="#22a382" stroke="#1f2440" stroke-width="0.45"/>
<polygon points="738.0,360.0 760.6,344.5 763.1,358.7" fill="#188c6c"/>
<path d="M738.0 360.0 L760.6 344.5 L763.1 358.7" fill="none" stroke="#1f2440" stroke-width="0.45"/>
<polygon points="763.8,358.7 789.6,341.5 817.8,341.5 838.7,354.9" fill="#2b85d4" stroke="#1f2440" stroke-width="0.45"/>
<polygon points="763.8,358.7 789.6,341.5 792.1,357.3" fill="#2172c0"/>
<path d="M763.8 358.7 L789.6 341.5 L792.1 357.3" fill="none" stroke="#1f2440" stroke-width="0.45"/>
<polygon points="829.0,336.0 857.0,336.0 898.0,355.5 796.0,356.3" fill="#7a5cb2" stroke="#2c2450" stroke-width="0.6"/>
<path d="M829 336 L837.3 355.5" stroke="#2c2450" stroke-width="0.6"/>
<polygon points="829.0,336.0 837.3,355.5 796.0,356.3" fill="#6c55b0"/>
<path d="M829 336 L796 356.3" stroke="#2c2450" stroke-width="0.6"/>
<g>
<ellipse cx="636" cy="472.5" rx="6" ry="1.3" fill="#e2e2e2"/>
<path d="M632 457 L629.5 463 L627.5 469.5 M636 457 L638.5 463 L641 470" fill="none" stroke="#8a5a3a" stroke-width="1.6"/>
<path d="M624.5 469 L629 471 M639 470.5 L643.5 472" stroke="#3f55b8" stroke-width="2.4" stroke-linecap="round"/>
<path d="M629.5 451.5 H637.5 L638.5 458.5 H628.5 Z" fill="#3a9ad9"/>
<path d="M629 444 Q633 441.5 636.5 444 L637.5 452 H629.5 Z" fill="#e23b3b"/>
<path d="M628.5 446 L627 451" stroke="#8a5a3a" stroke-width="1.4"/>
<rect x="633.5" y="441.5" width="8" height="10.5" rx="3" fill="#8cc63f" stroke="#4f7f22" stroke-width="0.5"/>
<path d="M635 447 H640.5" stroke="#5e9a2a" stroke-width="0.6"/>
<circle cx="632.5" cy="440" r="2.8" fill="#8a5a3a"/>
<path d="M629 439 Q632 434.5 636.5 437.5 L638.5 439.5 L630 439.8 Z" fill="#3bb3a0" stroke="#2a7a70" stroke-width="0.4"/>
</g>
<g>
<path d="M686 432 L684.5 438.5 M689 432 L690.5 438.5" stroke="#8a5a3a" stroke-width="1"/>
<path d="M684 427 Q687 422 690 427 L691 433 H683 Z" fill="#a46fc6"/>
<circle cx="687" cy="420.5" r="2.3" fill="#6a4030"/>
<circle cx="691.5" cy="431" r="1.5" fill="#e23a3a"/>
</g>
<rect x="496.5" y="533" width="388" height="75.5" rx="6" fill="url(#bluebox)" stroke="#2c3b8e" stroke-width="1.9" stroke-dasharray="0.01 3.05" stroke-linecap="round"/>
<text x="503.5" y="551" font-family="Liberation Sans" font-size="11.6" font-weight="bold" fill="#2f3d8f" letter-spacing="0">Шығарып көр</text>
<text x="503" y="566.8" font-family="Liberation Sans" font-size="11" fill="#333" letter-spacing="-0.01">Әр топтан артық санды тап. Неге оларды артық деп санайсың? Түсіндір.</text>
<rect x="503.8" y="574.5" width="372" height="25" fill="#fff" stroke="#444" stroke-width="1.2"/>
<path d="M689.5 574.5 V599.5" stroke="#444" stroke-width="1.2"/>
<g font-family="Liberation Sans" font-size="16.2" letter-spacing="-1.1" text-anchor="start">
<text x="526.5" y="592.8" fill="#9acd3c">13</text>
<text x="561" y="592.8" fill="#9acd3c">5</text>
<text x="588" y="592.8" fill="#9acd3c">7</text>
<text x="615.5" y="592.8" fill="#9acd3c">19</text>
<text x="651" y="592.8" fill="#9acd3c">14</text>
<text x="712.5" y="592.8" fill="#d7195c">12</text>
<text x="747" y="592.8" fill="#d7195c">8</text>
<text x="773.5" y="592.8" fill="#d7195c">7</text>
<text x="801" y="592.8" fill="#d7195c">10</text>
<text x="835.5" y="592.8" fill="#d7195c">20</text>
</g>
<rect x="473.5" y="657.5" width="351" height="80" fill="none" stroke="#d2232a" stroke-width="1.3"/>
<polygon points="494,673 500.5,651.5 592.8,634 599.8,660.8" fill="#666" opacity="0.75" filter="url(#bshadow)"/>
<polygon points="503,667 535,665 522,682" fill="#666" opacity="0.6" filter="url(#bshadow)"/>
<polygon points="489,668.1 495.5,646.5 587.8,629 594.8,655.8" fill="#c81e25" stroke="#f8e34a" stroke-width="1.1"/>
<polygon points="499,663.2 530.3,661.5 517.5,677.7" fill="#c81e25" stroke="#f8e34a" stroke-width="1.1"/>
<polygon points="501,663.6 528,662.2 517.5,676" fill="#c81e25"/>
<text x="0" y="0" font-family="Liberation Sans" font-size="12.4" font-weight="bold" fill="#fff" transform="translate(500.5,658.8) rotate(-8)" letter-spacing="0.1">Орындап көр</text>
<text x="495" y="692.5" font-family="Liberation Sans" font-size="11.4" fill="#333">Тура және кері ретпен екі-екіден санау кезінде шығатын</text>
<g stroke="#222" stroke-width="0.75" stroke-linejoin="round">
<path d="M853.8 674.7 L824.6 685.6 L824.6 700 L849.2 700 Z" fill="#c48bc8"/>
<path d="M834 684 L835 682 M842 680.5 L843 678.5 M828.5 686 L829.3 684" stroke="#6a3a6a" stroke-width="0.5"/>
<path d="M839.5 678.5 C837 673 832 670.5 828.5 673.5 C824 677 819 684 815 688.5 C812.5 691 813.5 696 817 697 C819.5 697.5 821.5 694 821 691.5 C824 687 828 680 831.5 676.5 C834 675 836.5 677 838 680 Z" fill="#fbe1dc"/>
<path d="M854.5 678 C856 684 858.5 692 860.5 700" fill="none" stroke="#222" stroke-width="0.7"/>
<path d="M838.3 662.9 L844.3 654.9 Q846 646 852 643.5 Q860 640.5 868 644 Q874 648 876 657 Q878 665 880.5 668.7 Q875 672.5 866 674.5 L846.6 668.1 Z" fill="#b8844f"/>
<ellipse cx="858.5" cy="662.5" rx="12.3" ry="13.2" fill="#fcdcd6"/>
<path d="M868 650 Q875 660 869.5 673.5 L880.5 668.7 Q877 660 874 652 Q871 646 866 644 Z" fill="#b8844f"/>
<path d="M847 653 Q851 647.5 856 648.3 Q865 651 871.5 659 L875 655 Q871 645.5 863 642.8 Q853 641.5 848 647.5 Z" fill="#b8844f"/>
<path d="M845.5 657 L841 664" stroke="#6a4a2a" stroke-width="0.5"/>
<ellipse cx="855.2" cy="659" rx="3" ry="3.8" fill="#fff" stroke-width="0.6"/>
<ellipse cx="854.4" cy="660.4" rx="1.8" ry="2" fill="#1f7e9a" stroke="none"/>
<ellipse cx="864" cy="661.5" rx="3" ry="3.8" fill="#fff" stroke-width="0.6"/>
<ellipse cx="863.2" cy="662.9" rx="1.8" ry="2" fill="#1f7e9a" stroke="none"/>
<path d="M857.5 665 Q858 667 859.5 666.5" fill="none" stroke-width="0.5"/>
<ellipse cx="856.1" cy="669.8" rx="1" ry="1.2" fill="#222" stroke="none"/>
</g>
<g transform="translate(847.2,650)"><ellipse cx="0" cy="-2.6" rx="1.3" ry="2.2" fill="#fff" stroke="#9a9a9a" stroke-width="0.35" transform="rotate(0)"/><ellipse cx="0" cy="-2.6" rx="1.3" ry="2.2" fill="#fff" stroke="#9a9a9a" stroke-width="0.35" transform="rotate(45)"/><ellipse cx="0" cy="-2.6" rx="1.3" ry="2.2" fill="#fff" stroke="#9a9a9a" stroke-width="0.35" transform="rotate(90)"/><ellipse cx="0" cy="-2.6" rx="1.3" ry="2.2" fill="#fff" stroke="#9a9a9a" stroke-width="0.35" transform="rotate(135)"/><ellipse cx="0" cy="-2.6" rx="1.3" ry="2.2" fill="#fff" stroke="#9a9a9a" stroke-width="0.35" transform="rotate(180)"/><ellipse cx="0" cy="-2.6" rx="1.3" ry="2.2" fill="#fff" stroke="#9a9a9a" stroke-width="0.35" transform="rotate(225)"/><ellipse cx="0" cy="-2.6" rx="1.3" ry="2.2" fill="#fff" stroke="#9a9a9a" stroke-width="0.35" transform="rotate(270)"/><ellipse cx="0" cy="-2.6" rx="1.3" ry="2.2" fill="#fff" stroke="#9a9a9a" stroke-width="0.35" transform="rotate(315)"/><circle r="1.2" fill="#f2d21a"/></g>
</svg>
<!-- /PDF PAGES -->

<div id="vscroll" class="a"></div>
<svg class="a" style="left:1351px;top:177px" width="13" height="9" viewBox="0 0 13 9">
 <path d="M0.5 3 H12.5 M0.5 6 H12.5" stroke="#111" stroke-width="1.3"/>
 <path d="M4 2 L6.5 0 L9 2 Z M4 7 L6.5 9 L9 7 Z" fill="#111"/>
</svg>
<svg class="a" style="left:1353px;top:191px" width="9" height="8" viewBox="0 0 9 8"><path d="M1 7 L4.5 2 L8 7" fill="none" stroke="#606060" stroke-width="1.8"/></svg>
<div class="a" style="left:1350px;top:555px;width:15px;height:17px;background:#cacaca"></div>
<svg class="a" style="left:1353px;top:688px" width="9" height="8" viewBox="0 0 9 8"><path d="M1 1 L4.5 6 L8 1" fill="none" stroke="#606060" stroke-width="1.8"/></svg>

<!-- status -->
<div id="status" class="a"></div>
<svg class="a" style="left:549px;top:705px" width="18" height="17" viewBox="0 0 18 17">
 <g stroke="#fff" stroke-width="1.6" stroke-linejoin="round" fill="#222">
 <path d="M10 1.8 L2.8 8.5 L10 15 Z"/><path d="M15 1.8 L12 8.5 V15 L15 15 Z"/>
 </g>
 <path d="M10 1.8 L2.8 8.5 L10 15 Z M15 1.8 L12 5.5 V15 H15 Z" fill="#222"/>
</svg>
<svg class="a" style="left:577px;top:705px" width="11" height="17" viewBox="0 0 11 17"><path d="M9 1.8 L1.8 8.5 L9 15 Z" fill="#222" stroke="#fff" stroke-width="1.6" stroke-linejoin="round"/><path d="M9 1.8 L1.8 8.5 L9 15 Z" fill="#222"/></svg>
<div class="a" style="left:597px;top:703px;width:116px;height:20px;background:#fff;border:1px solid #a9a9a9"></div>
<div class="t" style="left:603px;top:709px;color:#111;font-size:12.3px;letter-spacing:0.3px">107 / 140</div>
<svg class="a" style="left:702px;top:712px" width="7" height="4"><path d="M0 0 H6.5 L3.25 3.5 Z" fill="#111"/></svg>
<svg class="a" style="left:720px;top:705px" width="11" height="17" viewBox="0 0 11 17"><path d="M2 1.8 L9.2 8.5 L2 15 Z" fill="#222" stroke="#fff" stroke-width="1.6" stroke-linejoin="round"/><path d="M2 1.8 L9.2 8.5 L2 15 Z" fill="#222"/></svg>
<svg class="a" style="left:744px;top:705px" width="15" height="17" viewBox="0 0 15 17">
 <g stroke="#fff" stroke-width="1.6" stroke-linejoin="round" fill="#222">
 <path d="M6 1.8 L13.2 8.5 L6 15 Z"/><path d="M1 1.8 L4 5.5 V15 H1 Z"/>
 </g>
 <path d="M6 1.8 L13.2 8.5 L6 15 Z M1 1.8 L4 5.5 V11.5 L1 15 Z" fill="#222"/>
</svg>
<svg class="a" style="left:768px;top:705px" width="18" height="18" viewBox="0 0 18 18">
 <rect x="1.5" y="1.5" width="8" height="9" fill="#fff" stroke="#666" stroke-width="1"/>
 <rect x="1" y="1" width="9" height="1.5" fill="#2e6db4"/>
 <path d="M3 4.5 H8 M3 6.5 H8 M3 8.5 H8" stroke="#999" stroke-width="0.8" stroke-dasharray="1.5 1"/>
 <rect x="6.5" y="7.5" width="10" height="9.5" fill="#fff" stroke="#666" stroke-width="1"/>
 <rect x="6" y="7" width="11" height="1.8" fill="#6b6b6b"/>
 <path d="M8 10.5 H15.5 M8 12.5 H15.5 M8 14.5 H15.5" stroke="#666" stroke-width="0.9" stroke-dasharray="1.5 1"/>
 <path d="M17 4 H10 M12.5 1.5 L10 4 L12.5 6.5" fill="none" stroke="#3f9e78" stroke-width="1.7"/>
</svg>
<svg class="a" style="left:794px;top:705px" width="18" height="18" viewBox="0 0 18 18" opacity="0.55">
 <rect x="1.5" y="1.5" width="9" height="9" fill="#fff" stroke="#999" stroke-width="1"/>
 <rect x="1" y="1" width="10" height="1.5" fill="#999"/>
 <path d="M3 4.5 H9 M3 6.5 H9 M3 8.5 H9" stroke="#aaa" stroke-width="0.8" stroke-dasharray="1.5 1"/>
 <rect x="6.5" y="7.5" width="10" height="9.5" fill="#fff" stroke="#999" stroke-width="1"/>
 <rect x="6" y="7" width="11" height="1.8" fill="#7fa8d8"/>
 <path d="M8 10.5 H15.5 M8 12.5 H15.5 M8 14.5 H15.5" stroke="#999" stroke-width="0.9" stroke-dasharray="1.5 1"/>
 <path d="M0.5 13 H7 M4.5 10.5 L7 13 L4.5 15.5" fill="none" stroke="#3f9e78" stroke-width="1.7"/>
</svg>
<svg class="a" style="left:1029px;top:706px" width="13" height="16" viewBox="0 0 13 16"><rect x="0.5" y="0.5" width="11" height="14" fill="#fff" stroke="#666"/><path d="M3 4.5 H9 M3 7.5 H9 M3 10.5 H9" stroke="#666"/></svg>
<div class="a" style="left:1050px;top:705px;width:24px;height:18px;background:#d6b9e4"></div>
<svg class="a" style="left:1055px;top:705px" width="14" height="18" viewBox="0 0 14 18"><path d="M0.5 0 V7.5 H12.5 V0 M3 2.5 H10 M3 5 H10" fill="none" stroke="#555"/><path d="M0.5 18 V10.5 H12.5 V18 M3 13 H10 M3 15.5 H10" fill="none" stroke="#555"/></svg>
<svg class="a" style="left:1079px;top:707px" width="16" height="14" viewBox="0 0 16 14"><rect x="0.5" y="0.5" width="6.5" height="13" fill="#fff" stroke="#666"/><rect x="8.5" y="0.5" width="6.5" height="13" fill="#fff" stroke="#666"/><path d="M2.5 4 H5 M2.5 7 H5 M2.5 10 H5 M10.5 4 H13 M10.5 7 H13 M10.5 10 H13" stroke="#666"/></svg>
<svg class="a" style="left:1104px;top:705px" width="17" height="17" viewBox="0 0 17 17"><path d="M0.5 0 V7.5 H7 V0 M9.5 0 V7.5 H16 V0 M0.5 17 V9.5 H7 V17 M9.5 17 V9.5 H16 V17 M2 3 H5 M2 5 H5 M11 3 H14 M11 5 H14 M2 12 H5 M2 14 H5 M11 12 H14 M11 14 H14" fill="none" stroke="#666"/></svg>
<div class="t" style="left:1142px;top:709px;color:#333;font-size:12.3px;letter-spacing:0.3px">54.92%</div>
<svg class="a" style="left:1203px;top:712px" width="7" height="4"><path d="M0 0 H6 L3 3.5 Z" fill="#111"/></svg>
<svg class="a" style="left:1213px;top:705px" width="17" height="17" viewBox="0 0 17 17"><circle cx="8.5" cy="8.5" r="7.3" fill="none" stroke="#333" stroke-width="1.1"/><path d="M4.5 8.5 H12.5" stroke="#333" stroke-width="1.1"/></svg>
<div class="a" style="left:1236px;top:713px;width:91px;height:1px;background:#333"></div>
<div class="a" style="left:1257px;top:709px;width:4px;height:8px;background:#222"></div>
<div class="a" style="left:1281px;top:710px;width:1px;height:6px;background:#333"></div>
<svg class="a" style="left:1332px;top:705px" width="17" height="17" viewBox="0 0 17 17"><circle cx="8.5" cy="8.5" r="7.3" fill="none" stroke="#333" stroke-width="1.1"/><path d="M4.5 8.5 H12.5 M8.5 4.5 V12.5" stroke="#333" stroke-width="1.1"/></svg>

<!-- taskbar -->
<div id="taskbar" class="a"></div>
<div class="a" style="left:0;top:728px;width:60px;height:40px;background:linear-gradient(100deg,#3aaac4 0%,#38acc4 50%,#2f9db9 100%)"></div>
<svg class="a" style="left:11px;top:735px" width="31" height="31" viewBox="0 0 31 31">
 <path d="M0 4.5 L12.5 2.8 V14.5 H0 Z M14 2.6 L31 0 V14.5 H14 Z M0 16 H12.5 V28 L0 26.3 Z M14 16 H31 V31 L14 28.5 Z" fill="#fff"/>
</svg>
<svg width="0" height="0" style="position:absolute">
 <defs>
  <symbol id="i-word" viewBox="0 0 30 30">
   <path d="M1 1.5 H24 L27.5 5 V28.5 H1 Z" fill="#fff" stroke="#2850a8" stroke-width="1.2"/>
   <path d="M2 2.5 H23 V14 L2 20 Z" fill="#dfe8f7"/>
   <path d="M3 5 H8.5 L10.5 15 L13 5 H16.5 L19 15 L21 5 H26 L21 20 H16.5 L14.8 12 L13 20 H8.5 Z" fill="#1d4fb8"/>
   <path d="M15 20 L28 17 L26 27 L13 25 Z" fill="#fff" stroke="#9fb4d8" stroke-width="0.8"/>
   <path d="M4 24 L14 26 M5 21.5 L12 23" stroke="#b8c8e6" stroke-width="0.8"/>
  </symbol>
  <symbol id="i-chrome" viewBox="0 0 30 30">
   <circle cx="15" cy="15" r="14.5" fill="#db4437"/>
   <path d="M15 15 L27.56 7.75 A14.5 14.5 0 0 1 15 29.5 Z" fill="#f4c20d"/>
   <path d="M15 15 L15 29.5 A14.5 14.5 0 0 1 2.44 7.75 Z" fill="#3cba54"/>
   <path d="M15 8.3 H27.56 A14.5 14.5 0 0 0 2.44 7.75 L8.5 18.5 Z" fill="#db4437"/>
   <path d="M8.6 18.6 L2.44 7.75 A14.5 14.5 0 0 0 15 29.5 L20.8 18.5 Z" fill="#3cba54" opacity="0"/>
   <circle cx="15" cy="15" r="6.6" fill="#fff"/>
   <circle cx="15" cy="15" r="5.1" fill="#4885ed"/>
  </symbol>
  <symbol id="i-folder" viewBox="0 0 24 33">
   <path d="M3 1.5 L21 4 V27.5 L7 29.5 Z" fill="#eed07a"/>
   <path d="M7 4 L20 5.5 V26.5 L7 28 Z" fill="#f4df95"/>
   <path d="M1.5 1 L8.5 4.5 V32 L1.5 28 Z" fill="#f6e3a0" stroke="#e2c56a" stroke-width="0.5"/>
   <path d="M2.5 2.5 L7.5 5 V30 L2.5 27.5 Z" fill="#fbefc4"/>
   <path d="M16 18.5 L21.5 18 V27.5 L16 28 Z" fill="#e8cb5e"/>
   <rect x="18.2" y="19.5" width="1.5" height="7" fill="#fff"/>
   <rect x="18.2" y="25" width="1.5" height="1.5" fill="#5aa0d8"/>
  </symbol>
  <symbol id="i-foxit" viewBox="0 0 33 34">
   <path d="M1 1 H26 L32 7 V33 H1 Z" fill="#6b2a6f"/>
   <path d="M3 3 L30 31" stroke="#8a4f8e" stroke-width="5" opacity="0.5"/>
   <path d="M26 0.5 L32.5 7 H26 Z" fill="#7fb8cb"/>
   <path d="M26 1 L32 7 H26 Z" fill="#6b2a6f"/>
   <path d="M20.5 9.5 A7.5 7.5 0 1 0 22.5 17" fill="none" stroke="#fff" stroke-width="4"/>
   <path d="M16 16 Q19 13 23.5 14.5 Q22 10 18 8.5 Q22 7.5 24.5 10.5 Q26 14 23 18 Z" fill="#fff"/>
   <circle cx="15.5" cy="15.5" r="2.5" fill="#fff"/>
   <text x="16.5" y="31" font-family="Liberation Sans" font-size="7" font-weight="bold" fill="#fff" text-anchor="middle">PDF</text>
  </symbol>
 </defs>
</svg>

<div class="a" style="left:59px;top:729px;width:132px;height:38px;background:#55afc6;border:1px solid #86cad9"></div>
<svg class="a" style="left:68px;top:732px" width="30" height="29"><use href="#i-word"/></svg>
<div class="tbt" style="left:104px;letter-spacing:-0.2px">Математика ...</div>
<div class="a" style="left:192px;top:729px;width:133px;height:38px;background:#55afc6;border:1px solid #86cad9"></div>
<svg class="a" style="left:201px;top:732px" width="30" height="29"><use href="#i-word"/></svg>
<div class="tbt" style="left:237px;letter-spacing:0.45px">Календарн...</div>
<div class="a" style="left:326px;top:729px;width:132px;height:38px;background:#55afc6;border:1px solid #86cad9"></div>
<svg class="a" style="left:335px;top:732px" width="30" height="29"><use href="#i-word"/></svg>
<div class="tbt" style="left:371px;letter-spacing:-0.2px">Математика ...</div>
<div class="a" style="left:461px;top:729px;width:133px;height:38px;background:#55afc6;border:1px solid #86cad9"></div>
<svg class="a" style="left:471px;top:733px" width="30" height="30"><use href="#i-chrome"/></svg>
<div class="tbt" style="left:506px;letter-spacing:-0.2px">Социальная ...</div>
<div class="a" style="left:597px;top:729px;width:131px;height:38px;background:#55afc6;border:1px solid #86cad9"></div>
<svg class="a" style="left:607px;top:731px" width="24" height="33"><use href="#i-folder"/></svg>
<div class="tbt" style="left:642px;letter-spacing:0.15px">1-сынып пл...</div>
<div class="a" style="left:730px;top:729px;width:132px;height:38px;background:#55afc6;border:1px solid #86cad9"></div>
<svg class="a" style="left:740px;top:731px" width="24" height="33"><use href="#i-folder"/></svg>
<div class="tbt" style="left:775px;letter-spacing:0.15px">1-сынып пл...</div>
<div class="a" style="left:865px;top:729px;width:132px;height:38px;background:linear-gradient(170deg,#74afc5 0%,#80b8cb 60%,#8fc2d3 100%);border:1px solid #d4eef4"></div>
<svg class="a" style="left:873px;top:731px" width="33" height="34"><use href="#i-foxit"/></svg>
<div class="tbt" style="left:910px;letter-spacing:-0.2px">Математика ...</div>
<!-- tray -->
<svg class="a" style="left:1006px;top:741px" width="18" height="17" viewBox="0 0 18 17">
 <circle cx="9" cy="8.5" r="8" fill="#d9302f"/>
 <path d="M3 11 C6 9 10 8 15 5 M3 8 C6 6 10 4.5 14 3 M4 13.5 C8 12 12 10 16 8" stroke="#fff" stroke-width="1.3" fill="none"/>
</svg>
<svg class="a" style="left:1030px;top:742px" width="16" height="14" viewBox="0 0 16 14">
 <path d="M1 4.5 H4 L8 1 V13 L4 9.5 H1 Z" fill="#fff"/>
 <path d="M10.5 4.5 Q12 7 10.5 9.5 M12.5 2.5 Q15.5 7 12.5 11.5" fill="none" stroke="#fff" stroke-width="1.2"/>
</svg>
<svg class="a" style="left:1054px;top:741px" width="18" height="16" viewBox="0 0 18 16">
 <path d="M9 0.5 L17.5 15.5 H0.5 Z" fill="#e53c2b"/>
 <path d="M9 5 V10.5 M9 12 V14" stroke="#fff" stroke-width="1.8"/>
</svg>
<svg class="a" style="left:1078px;top:741px" width="17" height="17" viewBox="0 0 17 17">
 <circle cx="8.5" cy="8.5" r="8" fill="#fff"/>
 <circle cx="8.5" cy="4.5" r="2.3" fill="#e8352b"/><circle cx="12.5" cy="7.5" r="2.3" fill="#e8352b"/><circle cx="11" cy="12" r="2.3" fill="#e8352b"/><circle cx="6" cy="12" r="2.3" fill="#e8352b"/><circle cx="4.5" cy="7.5" r="2.3" fill="#e8352b"/>
 <circle cx="8.5" cy="8.5" r="2.3" fill="#f7c21a"/>
</svg>
<svg class="a" style="left:1102px;top:743px" width="17" height="13" viewBox="0 0 17 13">
 <ellipse cx="8.5" cy="6.5" rx="8" ry="2.2" fill="none" stroke="#cfe2f2" stroke-width="1" transform="rotate(-20 8.5 6.5)"/>
 <circle cx="8.5" cy="6.5" r="4.5" fill="#3d7ec9"/>
 <path d="M4 8 Q8.5 5 13 4" stroke="#cfe2f2" stroke-width="1" fill="none"/>
</svg>
<svg class="a" style="left:1127px;top:740px" width="17" height="18" viewBox="0 0 17 18">
 <circle cx="11" cy="6" r="5.5" fill="#3d7ec9"/>
 <path d="M11 3 V7 M11 8.5 V9.5" stroke="#fff" stroke-width="1.5"/>
 <rect x="1" y="11" width="8" height="5" fill="#e8eef5" stroke="#333" stroke-width="0.8"/>
 <path d="M0 17 H10" stroke="#333" stroke-width="1.2"/>
</svg>
<svg class="a" style="left:1150px;top:742px" width="17" height="15" viewBox="0 0 17 15">
 <path d="M1 5 H4.5 L9 1 V14 L4.5 10 H1 Z" fill="#e87a3a"/>
 <path d="M11.5 4.5 Q13.5 7.5 11.5 10.5 M13.5 2.5 Q17 7.5 13.5 12.5" fill="none" stroke="#555" stroke-width="1.2"/>
</svg>
<svg class="a" style="left:1174px;top:741px" width="17" height="17" viewBox="0 0 17 17">
 <path d="M8.5 8.5 L8.5 0.5 A8 8 0 0 1 16.5 8.5 Z" fill="#4aa3df"/>
 <path d="M8.5 8.5 L16.5 8.5 A8 8 0 0 1 8.5 16.5 Z" fill="#f5b82e"/>
 <path d="M8.5 8.5 L8.5 16.5 A8 8 0 0 1 0.5 8.5 Z" fill="#e8892b"/>
 <path d="M8.5 8.5 L0.5 8.5 A8 8 0 0 1 8.5 0.5 Z" fill="#6fbf4a"/>
</svg>
<svg class="a" style="left:1199px;top:741px" width="16" height="16" viewBox="0 0 16 16">
 <path d="M2 1 V4 M5 1 V4 M0.5 4 H6.5 V8 Q6.5 10 3.5 10 Q0.5 10 0.5 8 Z M3.5 10 V15.5" stroke="#fff" fill="#fff" stroke-width="1.2"/>
 <rect x="8.5" y="2.5" width="6.5" height="13" fill="none" stroke="#fff" stroke-width="1.2"/>
 <rect x="10" y="7" width="3.5" height="7" fill="#fff"/>
 <rect x="10.5" y="1" width="2.5" height="1.5" fill="#fff"/>
</svg>
<svg class="a" style="left:1223px;top:741px" width="17" height="16" viewBox="0 0 17 16">
 <path d="M1 13 V15 M4.5 11 V15 M8 8.5 V15 M11.5 5.5 V15 M15 2 V15" stroke="#fff" stroke-width="2"/>
</svg>
<div class="t" style="left:1254px;top:742px;color:#fff;font-size:12px;letter-spacing:-0.3px">ҚАЗ</div>
<div class="t" style="left:1310px;top:735px;color:#fff;font-size:12.8px;letter-spacing:-0.7px">2:29</div>
<div class="t" style="left:1293px;top:751px;color:#fff;font-size:12.8px;letter-spacing:-0.75px">30.08.2016</div>

</body></html>
